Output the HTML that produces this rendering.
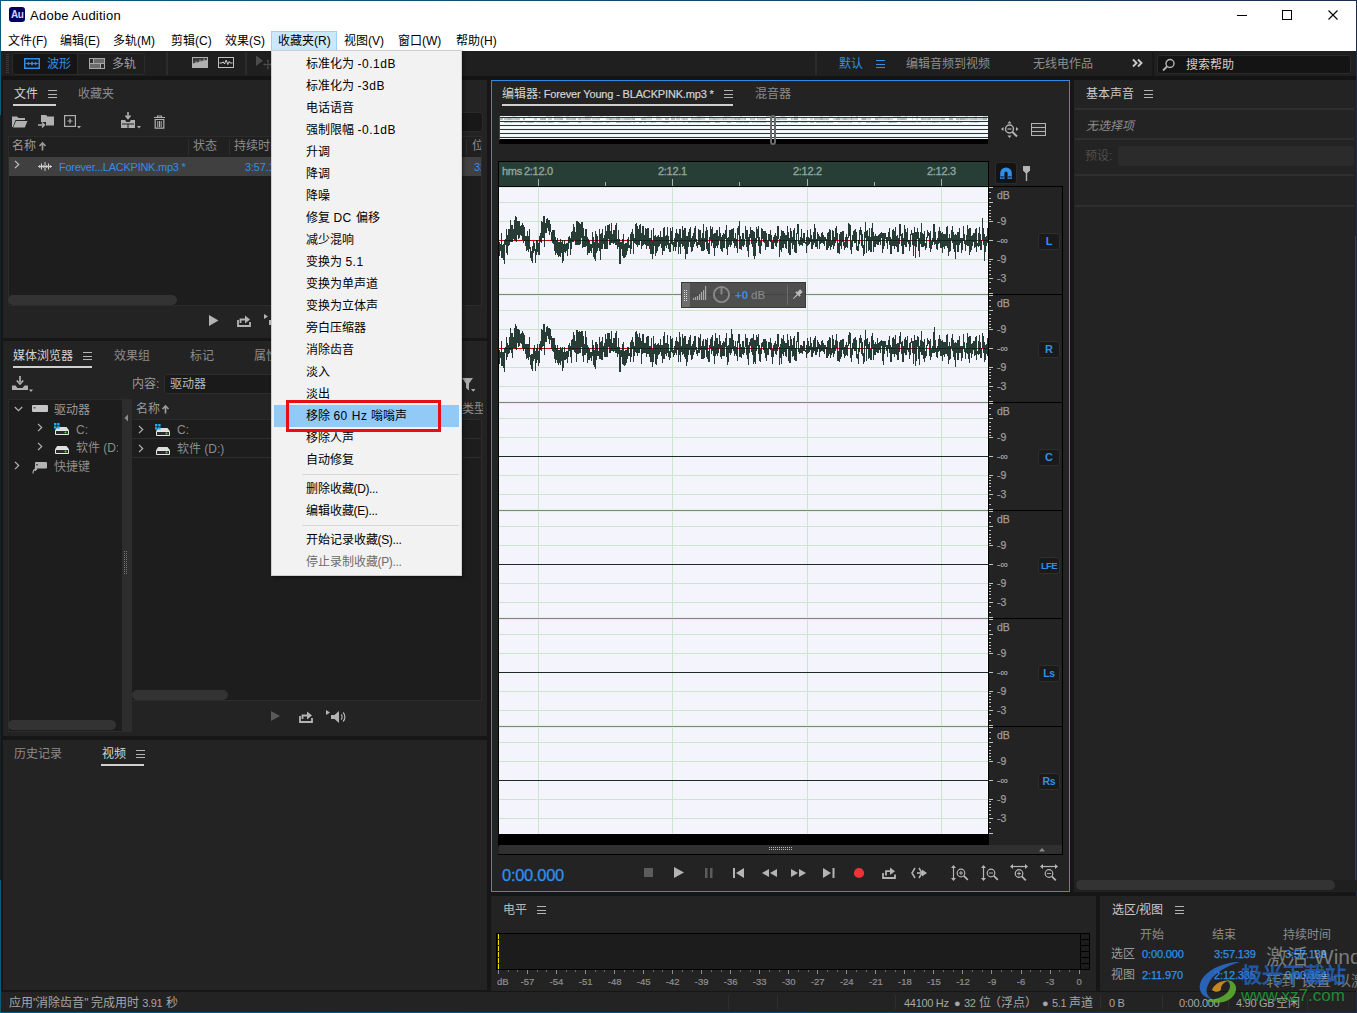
<!DOCTYPE html>
<html lang="zh-CN"><head><meta charset="utf-8"><title>Adobe Audition</title>
<style>
*{box-sizing:border-box;margin:0;padding:0}
html,body{width:1357px;height:1013px;overflow:hidden;background:#161616}
body{font-family:"Liberation Sans",sans-serif;font-size:12px;color:#a9a9a9}
#app{position:relative;width:1357px;height:1013px;overflow:hidden;background:#161616}
.a{position:absolute}
.t{position:absolute;white-space:nowrap;line-height:16px;height:16px}
.pn{position:absolute;background:#232323}
.bl{color:#2f8fe9}
.hi{color:#d4d4d4}
.dim{color:#8c8c8c}
svg{position:absolute;overflow:visible}
/* title + menubar */
#titlebar{left:1px;top:1px;width:1355px;height:29px;background:#fff}
#menubar{left:1px;top:30px;width:1355px;height:21px;background:#fff}
.mi{position:absolute;top:33px;height:16px;line-height:16px;font-size:12px;color:#000;white-space:nowrap}
/* dropdown */
#dd{left:271px;top:50px;width:191px;height:526px;background:#f2f2f2;border:1px solid #cfcfcf;box-shadow:2px 2px 3px rgba(0,0,0,.35)}
.di{position:absolute;left:35px;height:22px;line-height:22px;font-size:12px;color:#000;white-space:nowrap}
.sep{position:absolute;left:34px;width:153px;height:1px;background:#d7d7d7}
.ham{position:absolute;width:9px;height:8px;border-top:1px solid #b4b4b4;border-bottom:1px solid #b4b4b4}
.ham:after{content:"";position:absolute;left:0;top:2.5px;width:9px;height:1px;background:#b4b4b4}
.ul{position:absolute;height:2px;background:#cfcfcf}
.ham.b{border-color:#2f8fe9}.ham.b:after{background:#2f8fe9}
.sb{position:absolute;background:#333;border-radius:5px}
.lst{position:absolute;background:#1d1d1d;border:1px solid #2b2b2b}
.chev{position:absolute}
.di{left:33.500px}
.sep{left:30px;width:157px}
.di .l{letter-spacing:.55px}
.di .p{letter-spacing:-.35px}
.rl{font-size:11px;color:#8fa69d;letter-spacing:-.3px;-webkit-text-stroke:.35px #8fa69d}
.dbl{font-size:10.500px;color:#9c9c9c;-webkit-text-stroke:.25px #9c9c9c}
.sn{font-size:11px;color:#a6a6a6;letter-spacing:-.3px}
.sc{font-size:12px;color:#a6a6a6}
.sd{font-size:11px;color:#a6a6a6}
.sv{font-size:11px;letter-spacing:-.12px;-webkit-text-stroke:.25px #2f8fe9}
.lvl{font-size:9.500px;color:#8f8f8f;-webkit-text-stroke:.2px #8f8f8f}

</style></head>
<body>
<div id="app">
<!-- window frame -->
<div class="a" style="left:0;top:0;width:1357px;height:1013px;background:linear-gradient(90deg,#0d5a7a 0%,#12476a 60%,#1d2c4d 100%)"></div>
<div class="a" style="left:0;top:115px;width:1px;height:765px;background:#14222b"></div>
<div class="a" style="left:1356px;top:0;width:1px;height:1013px;background:#1d2c4d"></div>
<div class="a" style="left:1px;top:51px;width:1355px;height:961px;background:#161616"></div>
<!-- title bar -->
<div class="a" id="titlebar"></div>
<div class="a" style="left:9px;top:7px;width:16px;height:15px;background:#00005b;border-radius:3px"></div>
<div class="t" style="left:11px;top:7px;font-size:10px;font-weight:bold;color:#cfcfff;line-height:15px;height:15px;letter-spacing:-.5px">Au</div>
<div class="t" id="ttl" style="left:30px;top:8px;font-size:13px;color:#000;letter-spacing:.25px">Adobe Audition</div>
<svg style="left:1230px;top:5px" width="120" height="22" viewBox="0 0 120 22"><g stroke="#000" stroke-width="1" fill="none" shape-rendering="crispEdges">
<path d="M7 10.5h10"/><rect x="52.5" y="5.5" width="9" height="9"/></g><path d="M98.500 5.500l9 9M107.500 5.500l-9 9" stroke="#000" stroke-width="1.1" fill="none"/></svg>
<!-- menu bar -->
<div class="a" id="menubar"></div>
<div class="a" style="left:271px;top:31px;width:66px;height:20px;background:#cce8ff;border:1px solid #99d1ff"></div>
<div class="mi" style="left:8px">文件(F)</div>
<div class="mi" style="left:60px">编辑(E)</div>
<div class="mi" style="left:113px">多轨(M)</div>
<div class="mi" style="left:171px">剪辑(C)</div>
<div class="mi" style="left:225px">效果(S)</div>
<div class="mi" style="left:278px">收藏夹(R)</div>
<div class="mi" style="left:344px">视图(V)</div>
<div class="mi" style="left:398px">窗口(W)</div>
<div class="mi" style="left:456px">帮助(H)</div>
<!-- toolbar -->
<div class="a" style="left:1px;top:51px;width:1355px;height:25px;background:#1f1f1f"></div>
<div class="a" style="left:1px;top:76px;width:1355px;height:4px;background:#141414"></div>
<!-- grip -->
<svg style="left:6px;top:54px" width="4" height="20"><g fill="#3a3a3a"><rect x="0" y="0" width="3" height="1"/><rect x="0" y="2" width="3" height="1"/><rect x="0" y="4" width="3" height="1"/><rect x="0" y="6" width="3" height="1"/><rect x="0" y="8" width="3" height="1"/><rect x="0" y="10" width="3" height="1"/><rect x="0" y="12" width="3" height="1"/><rect x="0" y="14" width="3" height="1"/><rect x="0" y="16" width="3" height="1"/><rect x="0" y="18" width="3" height="1"/></g></svg>
<div class="a" style="left:12px;top:53px;width:133px;height:22px;background:#1f1f1f;border:1px solid #2b2b2b;border-radius:3px"></div>
<div class="a" style="left:12px;top:53px;width:66px;height:22px;background:#151515;border:1px solid #2b2b2b;border-radius:3px 0 0 3px"></div>
<svg style="left:24px;top:58px" width="16" height="11" viewBox="0 0 16 11"><rect x=".75" y=".75" width="14.5" height="9.5" fill="none" stroke="#2f8fe9" stroke-width="1.5"/><path d="M1.500 5.500h13" stroke="#2f8fe9" stroke-width="1"/><path d="M3 5.500l1.500-2 1.500 2-1.500 2zM6.500 5.500l1.500-2.500 1.500 2.500-1.500 2.500zM10 5.500l1.500-2 1.500 2-1.500 2z" fill="#2f8fe9"/></svg>
<div class="t bl" style="left:47px;top:56px">波形</div>
<svg style="left:89px;top:58px" width="16" height="11" viewBox="0 0 16 11" shape-rendering="crispEdges"><rect x="0" y="0" width="16" height="11" fill="#a8a8a8"/><rect x="1" y="1" width="3" height="4" fill="#2a2a2a"/><rect x="5" y="1" width="10" height="4" fill="#6a6a6a"/><rect x="1" y="6" width="10" height="4" fill="#6a6a6a"/><rect x="12" y="6" width="3" height="4" fill="#2a2a2a"/></svg>
<div class="t" style="left:112px;top:56px;color:#a0a0a0">多轨</div>
<div class="a" style="left:166px;top:52px;width:2px;height:23px;background:#2b2b2b"></div>
<svg style="left:192px;top:57px" width="16" height="11" viewBox="0 0 16 11"><rect x="0" y="0" width="16" height="11" fill="#b0b0b0"/><rect x="1" y="1" width="14" height="9" fill="#3a3a3a"/><path d="M1 10V7l1-1.500 1 1 1-3 1 2.500 1-1.500 1 1 1-3.500 1 3 1-2 1 1.500 1-3.500 1 3 1-1.500 1 1V10z" fill="#b0b0b0"/></svg>
<svg style="left:218px;top:57px" width="16" height="11" viewBox="0 0 16 11"><rect x=".5" y=".5" width="15" height="10" fill="#1c1c1c" stroke="#c0c0c0"/><path d="M1.500 6h2.500l1.200-1.200 1.300 2.200 1.700-4 1.600 4.500 1.400-3 1 1.500h2.300" stroke="#d0d0d0" stroke-width="1" fill="none"/></svg>
<div class="a" style="left:245px;top:52px;width:2px;height:23px;background:#2b2b2b"></div>
<svg style="left:256px;top:55px" width="16" height="16" viewBox="0 0 16 16"><path d="M0 .5v10.500l7-5.200z" fill="#4c4c4c"/><path d="M12 5.500v8M8 9.500h8" stroke="#4c4c4c" stroke-width="1.100"/><path d="M12 4.500l1.500 2h-3zM12 14.500l1.500-2h-3zM7 9.500l2-1.500v3zM16 9.500l-2-1.500v3z" fill="#4c4c4c"/></svg>
<!-- right of toolbar -->
<div class="a" style="left:815px;top:52px;width:2px;height:23px;background:#2b2b2b"></div>
<div class="t bl" style="left:839px;top:56px">默认</div>
<div class="ham b" style="left:876px;top:60px"></div>
<div class="t" style="left:906px;top:56px;color:#8e8e8e">编辑音频到视频</div>
<div class="t" style="left:1033px;top:56px;color:#8e8e8e">无线电作品</div>
<svg style="left:1132px;top:59px" width="11" height="8" viewBox="0 0 11 8"><path d="M1 .5l3.500 3.500L1 7.500M6 .5l3.500 3.500L6 7.500" stroke="#c8c8c8" stroke-width="1.900" fill="none"/></svg>
<div class="a" style="left:1152px;top:52px;width:2px;height:24px;background:#181818"></div>
<div class="a" style="left:1157px;top:55px;width:194px;height:19px;background:#141414;border:1px solid #2b2b2b;border-radius:3px"></div>
<svg style="left:1162px;top:58px" width="14" height="14" viewBox="0 0 14 14"><circle cx="8" cy="5.500" r="4" fill="none" stroke="#b4b4b4" stroke-width="1.400"/><path d="M5 8.500L1 12.500" stroke="#b4b4b4" stroke-width="1.800"/></svg>
<div class="t" style="left:1186px;top:57px;color:#cfcfcf">搜索帮助</div>
<!-- FILES panel -->
<div class="pn" style="left:3px;top:80px;width:484px;height:258px"></div>
<div class="t hi" style="left:14px;top:86px">文件</div>
<div class="ham" style="left:48px;top:90px"></div>
<div class="ul" style="left:13px;top:104px;width:43px"></div>
<div class="t dim" style="left:78px;top:86px">收藏夹</div>
<!-- file toolbar icons -->
<svg style="left:12px;top:114px" width="16" height="15" viewBox="0 0 16 15"><path d="M0 2.500h5l1.500 1.500H13v2H3.500L.8 13H0z" fill="#b0b0b0"/><path d="M4 7h11.500l-2.700 6.500H1.200z" fill="#b0b0b0"/></svg>
<svg style="left:38px;top:113px" width="17" height="17" viewBox="0 0 17 17"><path d="M3 2h5l1.500 1.500H16v9H8V9H3z" fill="#b0b0b0"/><path d="M0 12h6M4 9.500l2.500 2.500L4 14.500" stroke="#b0b0b0" stroke-width="1.400" fill="none"/></svg>
<svg style="left:64px;top:115px" width="18" height="15" viewBox="0 0 18 15"><rect x=".6" y=".6" width="10.800" height="10.800" fill="none" stroke="#b0b0b0" stroke-width="1.200"/><path d="M6 3.500v5M3.500 6h5" stroke="#b0b0b0" stroke-width="1.200"/><path d="M13 11h4l-2 2.500z" fill="#b0b0b0"/></svg>
<svg style="left:121px;top:112px" width="21" height="18" viewBox="0 0 21 18"><path d="M7 0v5M4.500 3.500L7 6.500l2.500-3" stroke="#b0b0b0" stroke-width="1.600" fill="none"/><path d="M0 8h4l1.500 2h3L10 8h4v8H0z" fill="#b0b0b0"/><path d="M1 12h12M7 12v4" stroke="#232323" stroke-width="1"/><path d="M16 14h4l-2 2.500z" fill="#b0b0b0"/></svg>
<svg style="left:153px;top:115px" width="13" height="14" viewBox="0 0 13 14"><path d="M1 2.500h11M4.500 2.500v-1.500h4v1.500" stroke="#b0b0b0" stroke-width="1.200" fill="none"/><path d="M2.200 4.500h8.600v8.700H2.200z" fill="none" stroke="#b0b0b0" stroke-width="1.200"/><path d="M4.800 6v6M6.500 6v6M8.200 6v6" stroke="#b0b0b0" stroke-width="1"/></svg>
<!-- search box (peeking right of menu) -->
<div class="a" style="left:330px;top:112px;width:153px;height:20px;background:#181818;border:1px solid #2b2b2b;border-radius:3px"></div>
<!-- list -->
<div class="lst" style="left:8px;top:136px;width:474px;height:170px"></div>
<div class="a" style="left:9px;top:137px;width:472px;height:20px;background:#202020"></div>
<div class="t" style="left:12px;top:138px;color:#9a9a9a">名称</div>
<svg style="left:38px;top:142px" width="9" height="9" viewBox="0 0 9 9"><path d="M4.500 1v7.500M1.500 4l3-3 3 3" stroke="#9a9a9a" stroke-width="1.700" fill="none"/></svg>
<div class="a" style="left:188px;top:139px;width:1px;height:16px;background:#2d2d2d"></div>
<div class="t" style="left:193px;top:138px;color:#8c8c8c">状态</div>
<div class="a" style="left:229px;top:139px;width:1px;height:16px;background:#2d2d2d"></div>
<div class="t" style="left:234px;top:138px;color:#8c8c8c">持续时间</div>
<div class="a" style="left:466px;top:139px;width:1px;height:16px;background:#2d2d2d"></div>
<div class="t" style="left:472px;top:138px;color:#8c8c8c;width:9px;overflow:hidden">位</div>
<div class="a" style="left:9px;top:157px;width:472px;height:19px;background:#404040"></div>
<svg class="chev" style="left:14px;top:160px" width="6" height="9" viewBox="0 0 6 9"><path d="M1 .8l3.700 3.700L1 8.200" stroke="#c0c0c0" stroke-width="1.200" fill="none"/></svg>
<svg style="left:38px;top:162px" width="14" height="9" viewBox="0 0 14 9"><path d="M0 4.500h14M3.500 1.500v6M7 0v9M10.500 1.500v6M1.800 3v3M5.200 3v3M8.800 3v3M12.200 3v3" stroke="#d0d0d0" stroke-width="1" fill="none"/></svg>
<div class="t bl" style="left:59px;top:159px;font-size:11px;letter-spacing:-.26px">Forever...LACKPINK.mp3 *</div>
<div class="t bl" style="left:245px;top:159px;font-size:11px;letter-spacing:-.2px">3:57.139</div>
<div class="t bl" style="left:474px;top:159px;font-size:11px;width:7px;overflow:hidden">32</div>
<div class="sb" style="left:8px;top:295px;width:169px;height:10px"></div>
<!-- transport mini -->
<svg style="left:209px;top:315px" width="10" height="11" viewBox="0 0 10 11"><path d="M0 0l9.500 5.500L0 11z" fill="#b4b4b4"/></svg>
<svg style="left:237px;top:314px" width="15" height="13" viewBox="0 0 15 13"><path d="M1 6v6h12V8" stroke="#b4b4b4" stroke-width="1.800" fill="none"/><path d="M3.500 9V5.500h5" stroke="#b4b4b4" stroke-width="1.800" fill="none"/><path d="M8 1.500l5 4-5 4z" fill="#b4b4b4"/></svg>
<svg style="left:263px;top:314px" width="12" height="14" viewBox="0 0 12 14"><path d="M1 0l4 2.500L1 5z" fill="#b4b4b4"/><path d="M6 6h3v5H6z" fill="#b4b4b4"/></svg>
<!-- MEDIA BROWSER panel -->
<div class="pn" style="left:3px;top:341px;width:484px;height:395px"></div>
<div class="t hi" style="left:13px;top:348px">媒体浏览器</div>
<div class="ham" style="left:83px;top:352px"></div>
<div class="ul" style="left:13px;top:366px;width:79px"></div>
<div class="t dim" style="left:114px;top:348px">效果组</div>
<div class="t dim" style="left:190px;top:348px">标记</div>
<div class="t dim" style="left:254px;top:348px">属性</div>
<!-- import icon -->
<svg style="left:12px;top:376px" width="22" height="16" viewBox="0 0 22 16"><path d="M8 0v6M4.800 4.500L8 8l3.200-3.500" stroke="#b0b0b0" stroke-width="1.700" fill="none"/><path d="M0 9.500h3.500l2 2.500h5l2-2.500H16V14H0z" fill="#b0b0b0"/><path d="M17 13.500h4l-2 2.500z" fill="#b0b0b0"/></svg>
<div class="t" style="left:132px;top:376px;color:#9a9a9a">内容:</div>
<div class="a" style="left:164px;top:374px;width:290px;height:20px;background:#1a1a1a;border:1px solid #2d2d2d;border-radius:3px"></div>
<div class="t" style="left:170px;top:376px;color:#b9b9b9">驱动器</div>
<!-- filter icon peeking out right of menu -->
<svg style="left:462px;top:378px" width="14" height="14" viewBox="0 0 14 14"><path d="M0 0h11L7 5.500V12.500L4 10V5.500z" fill="#a8a8a8"/><path d="M9 11h4.500l-2.250 2.700z" fill="#a8a8a8"/></svg>
<!-- tree -->
<div class="lst" style="left:8px;top:399px;width:114px;height:333px;border-right:none"></div>
<div class="a" style="left:122px;top:399px;width:10px;height:333px;background:#2d2d2d"></div>
<svg style="left:124px;top:414px" width="5" height="9" viewBox="0 0 5 9"><path d="M4 .5v7L.5 4z" fill="#8c8c8c"/></svg>
<svg style="left:124px;top:551px" width="5" height="30" viewBox="0 0 5 30"><g fill="#777"><rect x="0" y="0" width="1" height="1"/><rect x="2" y="0" width="1" height="1"/><rect x="0" y="2" width="1" height="1"/><rect x="2" y="2" width="1" height="1"/><rect x="0" y="4" width="1" height="1"/><rect x="2" y="4" width="1" height="1"/><rect x="0" y="6" width="1" height="1"/><rect x="2" y="6" width="1" height="1"/><rect x="0" y="8" width="1" height="1"/><rect x="2" y="8" width="1" height="1"/><rect x="0" y="10" width="1" height="1"/><rect x="2" y="10" width="1" height="1"/><rect x="0" y="12" width="1" height="1"/><rect x="2" y="12" width="1" height="1"/><rect x="0" y="14" width="1" height="1"/><rect x="2" y="14" width="1" height="1"/><rect x="0" y="16" width="1" height="1"/><rect x="2" y="16" width="1" height="1"/><rect x="0" y="18" width="1" height="1"/><rect x="2" y="18" width="1" height="1"/><rect x="0" y="20" width="1" height="1"/><rect x="2" y="20" width="1" height="1"/><rect x="0" y="22" width="1" height="1"/><rect x="2" y="22" width="1" height="1"/></g></svg>
<!-- tree rows -->
<svg class="chev" style="left:14px;top:406px" width="9" height="6" viewBox="0 0 9 6"><path d="M.8 1l3.700 3.700L8.200 1" stroke="#b4b4b4" stroke-width="1.200" fill="none"/></svg>
<svg style="left:32px;top:405px" width="16" height="7" viewBox="0 0 16 7"><rect x="0" y="0" width="16" height="7" rx="1" fill="#c4c4c4"/><rect x="1.500" y="2" width="2" height="1.500" fill="#555"/></svg>
<div class="t" style="left:54px;top:402px;color:#9a9a9a">驱动器</div>
<svg class="chev" style="left:37px;top:423px" width="6" height="9" viewBox="0 0 6 9"><path d="M1 .8l3.700 3.700L1 8.200" stroke="#b4b4b4" stroke-width="1.200" fill="none"/></svg>
<svg style="left:54px;top:422px" width="16" height="14" viewBox="0 0 16 14"><path d="M3.200 5h9.300L15 8.200H1z" fill="#dedede"/><rect x="1" y="8" width="14" height="5" rx=".8" fill="#e6e6e6"/><rect x="2" y="9" width="12" height="3" fill="#2b2b2b"/><circle cx="11.500" cy="10.500" r="1" fill="#3be03b"/><g fill="#12b4f5"><rect x="0" y="1" width="2.400" height="2.400"/><rect x="3.200" y="1" width="2.400" height="2.400"/><rect x="0" y="4.200" width="2.400" height="2.400"/><rect x="3.200" y="4.200" width="2.400" height="2.400"/></g></svg>
<div class="t" style="left:76px;top:422px;color:#8c8c8c">C:</div>
<svg class="chev" style="left:37px;top:442px" width="6" height="9" viewBox="0 0 6 9"><path d="M1 .8l3.700 3.700L1 8.200" stroke="#b4b4b4" stroke-width="1.200" fill="none"/></svg>
<svg style="left:54px;top:441px" width="16" height="14" viewBox="0 0 16 14"><path d="M3.200 5h9.300L15 8.200H1z" fill="#dedede"/><rect x="1" y="8" width="14" height="5" rx=".8" fill="#e6e6e6"/><rect x="2" y="9" width="12" height="3" fill="#2b2b2b"/><circle cx="11.500" cy="10.500" r="1" fill="#3be03b"/></svg>
<div class="t" style="left:76px;top:440px;color:#8c8c8c;width:42px;overflow:hidden">软件 (D:)</div>
<svg class="chev" style="left:14px;top:461px" width="6" height="9" viewBox="0 0 6 9"><path d="M1 .8l3.700 3.700L1 8.200" stroke="#b4b4b4" stroke-width="1.200" fill="none"/></svg>
<svg style="left:32px;top:462px" width="16" height="12" viewBox="0 0 16 12"><rect x="3" y="0" width="12" height="6.500" rx="1" fill="#b4b4b4"/><rect x="4" y="2" width="2" height="1.500" fill="#555"/><path d="M1 11.500c0-3 1-4.500 3.500-4.500M2.800 5.500l2 1.500-2 1.800" stroke="#b4b4b4" stroke-width="1.100" fill="none"/></svg>
<div class="t" style="left:54px;top:459px;color:#8c8c8c">快捷键</div>
<div class="sb" style="left:8px;top:720px;width:108px;height:10px"></div>
<!-- content list -->
<div class="lst" style="left:132px;top:419px;width:350px;height:282px;border-left:none;border-radius:0 3px 0 0"></div>
<div class="a" style="left:132px;top:399px;width:349px;height:20px;background:#232323"></div>
<div class="t" style="left:136px;top:401px;color:#9a9a9a">名称</div>
<svg style="left:161px;top:405px" width="9" height="9" viewBox="0 0 9 9"><path d="M4.500 1v7.500M1.500 4l3-3 3 3" stroke="#9a9a9a" stroke-width="1.700" fill="none"/></svg>
<div class="t" style="left:461.500px;top:401px;color:#8c8c8c;width:21px;overflow:hidden">类型</div>
<div class="a" style="left:132px;top:438px;width:349px;height:1px;background:#2d2d2d"></div>
<div class="a" style="left:132px;top:457px;width:349px;height:1px;background:#2d2d2d"></div>
<svg class="chev" style="left:138px;top:425px" width="6" height="9" viewBox="0 0 6 9"><path d="M1 .8l3.700 3.700L1 8.200" stroke="#b4b4b4" stroke-width="1.200" fill="none"/></svg>
<svg style="left:155px;top:423px" width="16" height="14" viewBox="0 0 16 14"><path d="M3.200 5h9.300L15 8.200H1z" fill="#dedede"/><rect x="1" y="8" width="14" height="5" rx=".8" fill="#e6e6e6"/><rect x="2" y="9" width="12" height="3" fill="#2b2b2b"/><circle cx="11.500" cy="10.500" r="1" fill="#3be03b"/><g fill="#12b4f5"><rect x="0" y="1" width="2.400" height="2.400"/><rect x="3.200" y="1" width="2.400" height="2.400"/><rect x="0" y="4.200" width="2.400" height="2.400"/><rect x="3.200" y="4.200" width="2.400" height="2.400"/></g></svg>
<div class="t" style="left:177px;top:422px;color:#8c8c8c">C:</div>
<svg class="chev" style="left:138px;top:444px" width="6" height="9" viewBox="0 0 6 9"><path d="M1 .8l3.700 3.700L1 8.200" stroke="#b4b4b4" stroke-width="1.200" fill="none"/></svg>
<svg style="left:155px;top:442px" width="16" height="14" viewBox="0 0 16 14"><path d="M3.200 5h9.300L15 8.200H1z" fill="#dedede"/><rect x="1" y="8" width="14" height="5" rx=".8" fill="#e6e6e6"/><rect x="2" y="9" width="12" height="3" fill="#2b2b2b"/><circle cx="11.500" cy="10.500" r="1" fill="#3be03b"/></svg>
<div class="t" style="left:177px;top:441px;color:#8c8c8c">软件 (D:)</div>
<div class="sb" style="left:132px;top:690px;width:96px;height:10px"></div>
<!-- bottom transport -->
<svg style="left:271px;top:711px" width="9" height="10" viewBox="0 0 9 10"><path d="M0 0l9 5L0 10z" fill="#5a5a5a"/></svg>
<svg style="left:299px;top:710px" width="15" height="13" viewBox="0 0 15 13"><path d="M1 6v6h12V8" stroke="#b4b4b4" stroke-width="1.800" fill="none"/><path d="M3.500 9V5.500h5" stroke="#b4b4b4" stroke-width="1.800" fill="none"/><path d="M8 1.500l5 4-5 4z" fill="#b4b4b4"/></svg>
<svg style="left:326px;top:709px" width="22" height="15" viewBox="0 0 22 15"><path d="M0 1l4 2.500L0 6z" fill="#b4b4b4"/><path d="M5 6h3.500L13 2v12L8.500 10H5z" fill="#b4b4b4"/><path d="M15 5.500c1.500 1 1.500 4 0 5M17 3.500c2.500 2 2.500 7 0 9" stroke="#b4b4b4" stroke-width="1.200" fill="none"/></svg>
<!-- HISTORY / VIDEO panel -->
<div class="pn" style="left:3px;top:740px;width:484px;height:250px"></div>
<div class="t dim" style="left:14px;top:746px">历史记录</div>
<div class="t hi" style="left:102px;top:746px">视频</div>
<div class="ham" style="left:136px;top:750px"></div>
<div class="ul" style="left:101px;top:764px;width:43px"></div>
<!-- EDITOR panel -->
<div class="a" style="left:491px;top:80px;width:579px;height:812px;background:#232323;border:1px solid #2d8ceb"></div>
<div class="t hi" style="left:502px;top:86px" id="edtab">编辑器<span style="font-size:11px;letter-spacing:-.16px;-webkit-text-stroke:.2px #d4d4d4">: Forever Young - BLACKPINK.mp3 *</span></div>
<div class="ham" style="left:724px;top:90px"></div>
<div class="ul" style="left:502px;top:104px;width:231px"></div>
<div class="t dim" style="left:755px;top:86px">混音器</div>
<div class="a" style="left:499px;top:116px;width:489px;height:23px;background:#f3f3fc"></div>
<div class="a" style="left:499px;top:139px;width:489px;height:5px;background:#000"></div>
<svg style="left:499px;top:116px" width="489" height="28" viewBox="0 0 489 28" shape-rendering="crispEdges"><rect x="0" y="3" width="489" height="1" fill="#fff"/><rect x="0" y="7" width="489" height="1" fill="#fff"/><rect x="0" y="11" width="489" height="1" fill="#fff"/><rect x="0" y="15" width="489" height="1" fill="#fff"/><rect x="0" y="19" width="489" height="1" fill="#fff"/><rect x="1" y="2" width="3" height="2" fill="#8d9a96" opacity="0.71"/><rect x="4" y="0" width="1" height="1" fill="#8d9a96" opacity="0.22"/><rect x="5" y="2" width="2" height="2" fill="#8d9a96" opacity="0.56"/><rect x="5" y="6" width="2" height="1" fill="#8d9a96" opacity="0.52"/><rect x="7" y="2" width="1" height="2" fill="#8d9a96" opacity="0.53"/><rect x="7" y="6" width="1" height="1" fill="#8d9a96" opacity="0.65"/><rect x="8" y="2" width="1" height="2" fill="#8d9a96" opacity="0.63"/><rect x="8" y="6" width="1" height="1" fill="#8d9a96" opacity="0.30"/><rect x="9" y="2" width="2" height="2" fill="#8d9a96" opacity="0.78"/><rect x="9" y="6" width="2" height="1" fill="#8d9a96" opacity="0.37"/><rect x="11" y="2" width="2" height="2" fill="#8d9a96" opacity="0.66"/><rect x="11" y="6" width="2" height="1" fill="#8d9a96" opacity="0.68"/><rect x="13" y="2" width="4" height="2" fill="#8d9a96" opacity="0.51"/><rect x="13" y="6" width="4" height="1" fill="#8d9a96" opacity="0.36"/><rect x="13" y="0" width="4" height="1" fill="#8d9a96" opacity="0.29"/><rect x="17" y="2" width="1" height="2" fill="#8d9a96" opacity="0.67"/><rect x="17" y="6" width="1" height="1" fill="#8d9a96" opacity="0.44"/><rect x="18" y="2" width="3" height="2" fill="#8d9a96" opacity="0.56"/><rect x="18" y="6" width="3" height="1" fill="#8d9a96" opacity="0.40"/><rect x="21" y="6" width="3" height="1" fill="#8d9a96" opacity="0.62"/><rect x="24" y="2" width="1" height="2" fill="#8d9a96" opacity="0.67"/><rect x="25" y="2" width="1" height="2" fill="#8d9a96" opacity="0.77"/><rect x="26" y="6" width="3" height="1" fill="#8d9a96" opacity="0.49"/><rect x="29" y="6" width="3" height="1" fill="#8d9a96" opacity="0.68"/><rect x="29" y="0" width="3" height="1" fill="#8d9a96" opacity="0.30"/><rect x="32" y="6" width="3" height="1" fill="#8d9a96" opacity="0.67"/><rect x="35" y="2" width="3" height="2" fill="#8d9a96" opacity="0.49"/><rect x="38" y="6" width="3" height="1" fill="#8d9a96" opacity="0.32"/><rect x="41" y="2" width="4" height="2" fill="#8d9a96" opacity="0.68"/><rect x="41" y="6" width="4" height="1" fill="#8d9a96" opacity="0.40"/><rect x="45" y="2" width="2" height="2" fill="#8d9a96" opacity="0.76"/><rect x="45" y="6" width="2" height="1" fill="#8d9a96" opacity="0.50"/><rect x="47" y="0" width="2" height="1" fill="#8d9a96" opacity="0.47"/><rect x="49" y="2" width="4" height="2" fill="#8d9a96" opacity="0.55"/><rect x="49" y="6" width="4" height="1" fill="#8d9a96" opacity="0.64"/><rect x="49" y="0" width="4" height="1" fill="#8d9a96" opacity="0.34"/><rect x="53" y="6" width="2" height="1" fill="#8d9a96" opacity="0.50"/><rect x="55" y="2" width="4" height="2" fill="#8d9a96" opacity="0.56"/><rect x="55" y="0" width="4" height="1" fill="#8d9a96" opacity="0.45"/><rect x="59" y="2" width="2" height="2" fill="#8d9a96" opacity="0.57"/><rect x="59" y="6" width="2" height="1" fill="#8d9a96" opacity="0.34"/><rect x="59" y="0" width="2" height="1" fill="#8d9a96" opacity="0.43"/><rect x="61" y="2" width="3" height="2" fill="#8d9a96" opacity="0.71"/><rect x="61" y="6" width="3" height="1" fill="#8d9a96" opacity="0.53"/><rect x="61" y="0" width="3" height="1" fill="#8d9a96" opacity="0.29"/><rect x="64" y="6" width="3" height="1" fill="#8d9a96" opacity="0.69"/><rect x="67" y="2" width="3" height="2" fill="#8d9a96" opacity="0.61"/><rect x="67" y="6" width="3" height="1" fill="#8d9a96" opacity="0.52"/><rect x="67" y="0" width="3" height="1" fill="#8d9a96" opacity="0.40"/><rect x="70" y="2" width="4" height="2" fill="#8d9a96" opacity="0.58"/><rect x="74" y="2" width="3" height="2" fill="#8d9a96" opacity="0.68"/><rect x="79" y="2" width="3" height="2" fill="#8d9a96" opacity="0.59"/><rect x="79" y="6" width="3" height="1" fill="#8d9a96" opacity="0.63"/><rect x="82" y="2" width="4" height="2" fill="#8d9a96" opacity="0.39"/><rect x="86" y="2" width="4" height="2" fill="#8d9a96" opacity="0.60"/><rect x="86" y="0" width="4" height="1" fill="#8d9a96" opacity="0.50"/><rect x="90" y="2" width="2" height="2" fill="#8d9a96" opacity="0.55"/><rect x="90" y="0" width="2" height="1" fill="#8d9a96" opacity="0.41"/><rect x="92" y="0" width="1" height="1" fill="#8d9a96" opacity="0.47"/><rect x="93" y="2" width="1" height="2" fill="#8d9a96" opacity="0.43"/><rect x="93" y="6" width="1" height="1" fill="#8d9a96" opacity="0.31"/><rect x="94" y="2" width="4" height="2" fill="#8d9a96" opacity="0.38"/><rect x="94" y="6" width="4" height="1" fill="#8d9a96" opacity="0.59"/><rect x="98" y="2" width="3" height="2" fill="#8d9a96" opacity="0.48"/><rect x="98" y="6" width="3" height="1" fill="#8d9a96" opacity="0.35"/><rect x="101" y="6" width="3" height="1" fill="#8d9a96" opacity="0.42"/><rect x="101" y="0" width="3" height="1" fill="#8d9a96" opacity="0.35"/><rect x="107" y="2" width="3" height="2" fill="#8d9a96" opacity="0.42"/><rect x="107" y="6" width="3" height="1" fill="#8d9a96" opacity="0.49"/><rect x="107" y="0" width="3" height="1" fill="#8d9a96" opacity="0.24"/><rect x="110" y="2" width="1" height="2" fill="#8d9a96" opacity="0.75"/><rect x="110" y="6" width="1" height="1" fill="#8d9a96" opacity="0.34"/><rect x="111" y="2" width="2" height="2" fill="#8d9a96" opacity="0.74"/><rect x="113" y="2" width="2" height="2" fill="#8d9a96" opacity="0.57"/><rect x="115" y="2" width="2" height="2" fill="#8d9a96" opacity="0.47"/><rect x="117" y="2" width="4" height="2" fill="#8d9a96" opacity="0.78"/><rect x="117" y="6" width="4" height="1" fill="#8d9a96" opacity="0.67"/><rect x="117" y="0" width="4" height="1" fill="#8d9a96" opacity="0.21"/><rect x="121" y="2" width="4" height="2" fill="#8d9a96" opacity="0.37"/><rect x="121" y="6" width="4" height="1" fill="#8d9a96" opacity="0.46"/><rect x="125" y="2" width="3" height="2" fill="#8d9a96" opacity="0.56"/><rect x="125" y="6" width="3" height="1" fill="#8d9a96" opacity="0.50"/><rect x="128" y="2" width="3" height="2" fill="#8d9a96" opacity="0.62"/><rect x="128" y="6" width="3" height="1" fill="#8d9a96" opacity="0.56"/><rect x="131" y="2" width="1" height="2" fill="#8d9a96" opacity="0.41"/><rect x="131" y="6" width="1" height="1" fill="#8d9a96" opacity="0.58"/><rect x="132" y="2" width="1" height="2" fill="#8d9a96" opacity="0.51"/><rect x="133" y="2" width="1" height="2" fill="#8d9a96" opacity="0.60"/><rect x="133" y="0" width="1" height="1" fill="#8d9a96" opacity="0.41"/><rect x="134" y="2" width="2" height="2" fill="#8d9a96" opacity="0.70"/><rect x="134" y="6" width="2" height="1" fill="#8d9a96" opacity="0.53"/><rect x="140" y="6" width="2" height="1" fill="#8d9a96" opacity="0.60"/><rect x="142" y="2" width="1" height="2" fill="#8d9a96" opacity="0.54"/><rect x="142" y="6" width="1" height="1" fill="#8d9a96" opacity="0.61"/><rect x="143" y="2" width="2" height="2" fill="#8d9a96" opacity="0.66"/><rect x="145" y="2" width="2" height="2" fill="#8d9a96" opacity="0.59"/><rect x="145" y="6" width="2" height="1" fill="#8d9a96" opacity="0.59"/><rect x="145" y="0" width="2" height="1" fill="#8d9a96" opacity="0.23"/><rect x="147" y="2" width="1" height="2" fill="#8d9a96" opacity="0.36"/><rect x="148" y="2" width="4" height="2" fill="#8d9a96" opacity="0.37"/><rect x="148" y="0" width="4" height="1" fill="#8d9a96" opacity="0.39"/><rect x="152" y="2" width="1" height="2" fill="#8d9a96" opacity="0.41"/><rect x="152" y="6" width="1" height="1" fill="#8d9a96" opacity="0.67"/><rect x="152" y="0" width="1" height="1" fill="#8d9a96" opacity="0.38"/><rect x="153" y="6" width="4" height="1" fill="#8d9a96" opacity="0.39"/><rect x="157" y="2" width="4" height="2" fill="#8d9a96" opacity="0.48"/><rect x="157" y="0" width="4" height="1" fill="#8d9a96" opacity="0.32"/><rect x="161" y="2" width="2" height="2" fill="#8d9a96" opacity="0.39"/><rect x="163" y="6" width="3" height="1" fill="#8d9a96" opacity="0.32"/><rect x="166" y="2" width="2" height="2" fill="#8d9a96" opacity="0.66"/><rect x="166" y="6" width="2" height="1" fill="#8d9a96" opacity="0.68"/><rect x="168" y="2" width="2" height="2" fill="#8d9a96" opacity="0.60"/><rect x="168" y="6" width="2" height="1" fill="#8d9a96" opacity="0.60"/><rect x="172" y="2" width="4" height="2" fill="#8d9a96" opacity="0.67"/><rect x="172" y="0" width="4" height="1" fill="#8d9a96" opacity="0.40"/><rect x="176" y="6" width="1" height="1" fill="#8d9a96" opacity="0.48"/><rect x="177" y="2" width="4" height="2" fill="#8d9a96" opacity="0.50"/><rect x="177" y="0" width="4" height="1" fill="#8d9a96" opacity="0.42"/><rect x="182" y="2" width="2" height="2" fill="#8d9a96" opacity="0.39"/><rect x="184" y="2" width="2" height="2" fill="#8d9a96" opacity="0.63"/><rect x="184" y="6" width="2" height="1" fill="#8d9a96" opacity="0.39"/><rect x="186" y="2" width="3" height="2" fill="#8d9a96" opacity="0.52"/><rect x="189" y="6" width="3" height="1" fill="#8d9a96" opacity="0.64"/><rect x="192" y="2" width="2" height="2" fill="#8d9a96" opacity="0.53"/><rect x="192" y="6" width="2" height="1" fill="#8d9a96" opacity="0.31"/><rect x="192" y="0" width="2" height="1" fill="#8d9a96" opacity="0.21"/><rect x="194" y="2" width="4" height="2" fill="#8d9a96" opacity="0.51"/><rect x="194" y="6" width="4" height="1" fill="#8d9a96" opacity="0.42"/><rect x="198" y="2" width="4" height="2" fill="#8d9a96" opacity="0.56"/><rect x="198" y="6" width="4" height="1" fill="#8d9a96" opacity="0.56"/><rect x="198" y="0" width="4" height="1" fill="#8d9a96" opacity="0.46"/><rect x="202" y="2" width="4" height="2" fill="#8d9a96" opacity="0.46"/><rect x="202" y="6" width="4" height="1" fill="#8d9a96" opacity="0.36"/><rect x="202" y="0" width="4" height="1" fill="#8d9a96" opacity="0.27"/><rect x="206" y="6" width="4" height="1" fill="#8d9a96" opacity="0.60"/><rect x="210" y="2" width="1" height="2" fill="#8d9a96" opacity="0.65"/><rect x="210" y="6" width="1" height="1" fill="#8d9a96" opacity="0.68"/><rect x="210" y="0" width="1" height="1" fill="#8d9a96" opacity="0.40"/><rect x="211" y="2" width="3" height="2" fill="#8d9a96" opacity="0.46"/><rect x="211" y="0" width="3" height="1" fill="#8d9a96" opacity="0.41"/><rect x="214" y="2" width="2" height="2" fill="#8d9a96" opacity="0.63"/><rect x="216" y="2" width="3" height="2" fill="#8d9a96" opacity="0.51"/><rect x="216" y="6" width="3" height="1" fill="#8d9a96" opacity="0.70"/><rect x="219" y="2" width="2" height="2" fill="#8d9a96" opacity="0.44"/><rect x="219" y="6" width="2" height="1" fill="#8d9a96" opacity="0.54"/><rect x="221" y="2" width="3" height="2" fill="#8d9a96" opacity="0.38"/><rect x="224" y="2" width="1" height="2" fill="#8d9a96" opacity="0.73"/><rect x="225" y="2" width="1" height="2" fill="#8d9a96" opacity="0.46"/><rect x="225" y="0" width="1" height="1" fill="#8d9a96" opacity="0.34"/><rect x="226" y="2" width="2" height="2" fill="#8d9a96" opacity="0.57"/><rect x="226" y="0" width="2" height="1" fill="#8d9a96" opacity="0.45"/><rect x="228" y="2" width="4" height="2" fill="#8d9a96" opacity="0.37"/><rect x="228" y="6" width="4" height="1" fill="#8d9a96" opacity="0.69"/><rect x="228" y="0" width="4" height="1" fill="#8d9a96" opacity="0.35"/><rect x="232" y="2" width="4" height="2" fill="#8d9a96" opacity="0.46"/><rect x="236" y="2" width="1" height="2" fill="#8d9a96" opacity="0.76"/><rect x="237" y="2" width="2" height="2" fill="#8d9a96" opacity="0.55"/><rect x="237" y="6" width="2" height="1" fill="#8d9a96" opacity="0.47"/><rect x="239" y="2" width="2" height="2" fill="#8d9a96" opacity="0.76"/><rect x="239" y="6" width="2" height="1" fill="#8d9a96" opacity="0.48"/><rect x="241" y="2" width="2" height="2" fill="#8d9a96" opacity="0.41"/><rect x="241" y="6" width="2" height="1" fill="#8d9a96" opacity="0.61"/><rect x="241" y="0" width="2" height="1" fill="#8d9a96" opacity="0.32"/><rect x="243" y="2" width="2" height="2" fill="#8d9a96" opacity="0.39"/><rect x="243" y="6" width="2" height="1" fill="#8d9a96" opacity="0.33"/><rect x="245" y="2" width="2" height="2" fill="#8d9a96" opacity="0.57"/><rect x="245" y="6" width="2" height="1" fill="#8d9a96" opacity="0.58"/><rect x="247" y="6" width="3" height="1" fill="#8d9a96" opacity="0.61"/><rect x="251" y="2" width="1" height="2" fill="#8d9a96" opacity="0.72"/><rect x="252" y="2" width="1" height="2" fill="#8d9a96" opacity="0.47"/><rect x="253" y="2" width="2" height="2" fill="#8d9a96" opacity="0.49"/><rect x="253" y="6" width="2" height="1" fill="#8d9a96" opacity="0.50"/><rect x="255" y="2" width="1" height="2" fill="#8d9a96" opacity="0.69"/><rect x="255" y="0" width="1" height="1" fill="#8d9a96" opacity="0.22"/><rect x="256" y="6" width="2" height="1" fill="#8d9a96" opacity="0.40"/><rect x="258" y="2" width="1" height="2" fill="#8d9a96" opacity="0.54"/><rect x="258" y="6" width="1" height="1" fill="#8d9a96" opacity="0.43"/><rect x="258" y="0" width="1" height="1" fill="#8d9a96" opacity="0.38"/><rect x="259" y="2" width="2" height="2" fill="#8d9a96" opacity="0.39"/><rect x="259" y="6" width="2" height="1" fill="#8d9a96" opacity="0.37"/><rect x="261" y="2" width="4" height="2" fill="#8d9a96" opacity="0.55"/><rect x="261" y="6" width="4" height="1" fill="#8d9a96" opacity="0.43"/><rect x="265" y="2" width="2" height="2" fill="#8d9a96" opacity="0.55"/><rect x="265" y="6" width="2" height="1" fill="#8d9a96" opacity="0.61"/><rect x="267" y="0" width="4" height="1" fill="#8d9a96" opacity="0.44"/><rect x="271" y="2" width="4" height="2" fill="#8d9a96" opacity="0.44"/><rect x="271" y="6" width="4" height="1" fill="#8d9a96" opacity="0.66"/><rect x="271" y="0" width="4" height="1" fill="#8d9a96" opacity="0.41"/><rect x="275" y="2" width="3" height="2" fill="#8d9a96" opacity="0.45"/><rect x="275" y="6" width="3" height="1" fill="#8d9a96" opacity="0.38"/><rect x="278" y="2" width="3" height="2" fill="#8d9a96" opacity="0.70"/><rect x="278" y="6" width="3" height="1" fill="#8d9a96" opacity="0.62"/><rect x="281" y="2" width="1" height="2" fill="#8d9a96" opacity="0.53"/><rect x="281" y="6" width="1" height="1" fill="#8d9a96" opacity="0.63"/><rect x="282" y="2" width="1" height="2" fill="#8d9a96" opacity="0.53"/><rect x="282" y="0" width="1" height="1" fill="#8d9a96" opacity="0.48"/><rect x="283" y="2" width="3" height="2" fill="#8d9a96" opacity="0.56"/><rect x="283" y="6" width="3" height="1" fill="#8d9a96" opacity="0.34"/><rect x="283" y="0" width="3" height="1" fill="#8d9a96" opacity="0.41"/><rect x="286" y="2" width="1" height="2" fill="#8d9a96" opacity="0.61"/><rect x="286" y="6" width="1" height="1" fill="#8d9a96" opacity="0.46"/><rect x="287" y="2" width="1" height="2" fill="#8d9a96" opacity="0.58"/><rect x="287" y="6" width="1" height="1" fill="#8d9a96" opacity="0.52"/><rect x="292" y="2" width="1" height="2" fill="#8d9a96" opacity="0.71"/><rect x="292" y="6" width="1" height="1" fill="#8d9a96" opacity="0.54"/><rect x="293" y="2" width="2" height="2" fill="#8d9a96" opacity="0.38"/><rect x="293" y="6" width="2" height="1" fill="#8d9a96" opacity="0.44"/><rect x="295" y="2" width="4" height="2" fill="#8d9a96" opacity="0.77"/><rect x="295" y="6" width="4" height="1" fill="#8d9a96" opacity="0.59"/><rect x="295" y="0" width="4" height="1" fill="#8d9a96" opacity="0.43"/><rect x="302" y="2" width="2" height="2" fill="#8d9a96" opacity="0.39"/><rect x="302" y="6" width="2" height="1" fill="#8d9a96" opacity="0.44"/><rect x="304" y="2" width="4" height="2" fill="#8d9a96" opacity="0.35"/><rect x="304" y="6" width="4" height="1" fill="#8d9a96" opacity="0.37"/><rect x="311" y="2" width="3" height="2" fill="#8d9a96" opacity="0.40"/><rect x="311" y="6" width="3" height="1" fill="#8d9a96" opacity="0.62"/><rect x="314" y="6" width="1" height="1" fill="#8d9a96" opacity="0.55"/><rect x="315" y="2" width="2" height="2" fill="#8d9a96" opacity="0.61"/><rect x="317" y="2" width="4" height="2" fill="#8d9a96" opacity="0.54"/><rect x="317" y="6" width="4" height="1" fill="#8d9a96" opacity="0.66"/><rect x="321" y="2" width="3" height="2" fill="#8d9a96" opacity="0.75"/><rect x="321" y="6" width="3" height="1" fill="#8d9a96" opacity="0.47"/><rect x="321" y="0" width="3" height="1" fill="#8d9a96" opacity="0.29"/><rect x="324" y="2" width="2" height="2" fill="#8d9a96" opacity="0.50"/><rect x="324" y="6" width="2" height="1" fill="#8d9a96" opacity="0.61"/><rect x="326" y="2" width="1" height="2" fill="#8d9a96" opacity="0.57"/><rect x="327" y="2" width="3" height="2" fill="#8d9a96" opacity="0.56"/><rect x="327" y="6" width="3" height="1" fill="#8d9a96" opacity="0.66"/><rect x="330" y="6" width="4" height="1" fill="#8d9a96" opacity="0.57"/><rect x="330" y="0" width="4" height="1" fill="#8d9a96" opacity="0.30"/><rect x="334" y="2" width="3" height="2" fill="#8d9a96" opacity="0.40"/><rect x="337" y="2" width="2" height="2" fill="#8d9a96" opacity="0.77"/><rect x="339" y="2" width="1" height="2" fill="#8d9a96" opacity="0.72"/><rect x="339" y="6" width="1" height="1" fill="#8d9a96" opacity="0.43"/><rect x="339" y="0" width="1" height="1" fill="#8d9a96" opacity="0.47"/><rect x="340" y="2" width="1" height="2" fill="#8d9a96" opacity="0.77"/><rect x="340" y="6" width="1" height="1" fill="#8d9a96" opacity="0.30"/><rect x="341" y="2" width="3" height="2" fill="#8d9a96" opacity="0.35"/><rect x="341" y="6" width="3" height="1" fill="#8d9a96" opacity="0.44"/><rect x="344" y="2" width="4" height="2" fill="#8d9a96" opacity="0.67"/><rect x="344" y="6" width="4" height="1" fill="#8d9a96" opacity="0.35"/><rect x="348" y="2" width="3" height="2" fill="#8d9a96" opacity="0.44"/><rect x="348" y="6" width="3" height="1" fill="#8d9a96" opacity="0.36"/><rect x="351" y="2" width="1" height="2" fill="#8d9a96" opacity="0.48"/><rect x="351" y="6" width="1" height="1" fill="#8d9a96" opacity="0.64"/><rect x="352" y="2" width="1" height="2" fill="#8d9a96" opacity="0.79"/><rect x="352" y="6" width="1" height="1" fill="#8d9a96" opacity="0.59"/><rect x="352" y="0" width="1" height="1" fill="#8d9a96" opacity="0.49"/><rect x="353" y="2" width="4" height="2" fill="#8d9a96" opacity="0.43"/><rect x="357" y="2" width="2" height="2" fill="#8d9a96" opacity="0.51"/><rect x="357" y="0" width="2" height="1" fill="#8d9a96" opacity="0.43"/><rect x="359" y="6" width="3" height="1" fill="#8d9a96" opacity="0.52"/><rect x="362" y="2" width="1" height="2" fill="#8d9a96" opacity="0.45"/><rect x="363" y="2" width="4" height="2" fill="#8d9a96" opacity="0.78"/><rect x="367" y="2" width="4" height="2" fill="#8d9a96" opacity="0.37"/><rect x="367" y="6" width="4" height="1" fill="#8d9a96" opacity="0.61"/><rect x="371" y="2" width="1" height="2" fill="#8d9a96" opacity="0.54"/><rect x="372" y="6" width="4" height="1" fill="#8d9a96" opacity="0.70"/><rect x="376" y="2" width="3" height="2" fill="#8d9a96" opacity="0.70"/><rect x="376" y="6" width="3" height="1" fill="#8d9a96" opacity="0.69"/><rect x="379" y="2" width="2" height="2" fill="#8d9a96" opacity="0.44"/><rect x="379" y="6" width="2" height="1" fill="#8d9a96" opacity="0.45"/><rect x="379" y="0" width="2" height="1" fill="#8d9a96" opacity="0.39"/><rect x="381" y="2" width="2" height="2" fill="#8d9a96" opacity="0.38"/><rect x="381" y="0" width="2" height="1" fill="#8d9a96" opacity="0.32"/><rect x="383" y="2" width="2" height="2" fill="#8d9a96" opacity="0.36"/><rect x="385" y="2" width="4" height="2" fill="#8d9a96" opacity="0.46"/><rect x="389" y="2" width="1" height="2" fill="#8d9a96" opacity="0.72"/><rect x="389" y="6" width="1" height="1" fill="#8d9a96" opacity="0.35"/><rect x="390" y="2" width="3" height="2" fill="#8d9a96" opacity="0.42"/><rect x="390" y="6" width="3" height="1" fill="#8d9a96" opacity="0.69"/><rect x="393" y="2" width="1" height="2" fill="#8d9a96" opacity="0.40"/><rect x="393" y="6" width="1" height="1" fill="#8d9a96" opacity="0.42"/><rect x="394" y="6" width="4" height="1" fill="#8d9a96" opacity="0.53"/><rect x="394" y="0" width="4" height="1" fill="#8d9a96" opacity="0.36"/><rect x="398" y="2" width="4" height="2" fill="#8d9a96" opacity="0.57"/><rect x="398" y="0" width="4" height="1" fill="#8d9a96" opacity="0.43"/><rect x="402" y="2" width="4" height="2" fill="#8d9a96" opacity="0.67"/><rect x="402" y="6" width="4" height="1" fill="#8d9a96" opacity="0.42"/><rect x="406" y="2" width="2" height="2" fill="#8d9a96" opacity="0.52"/><rect x="406" y="6" width="2" height="1" fill="#8d9a96" opacity="0.31"/><rect x="406" y="0" width="2" height="1" fill="#8d9a96" opacity="0.34"/><rect x="408" y="6" width="1" height="1" fill="#8d9a96" opacity="0.51"/><rect x="409" y="6" width="4" height="1" fill="#8d9a96" opacity="0.37"/><rect x="413" y="2" width="1" height="2" fill="#8d9a96" opacity="0.37"/><rect x="413" y="6" width="1" height="1" fill="#8d9a96" opacity="0.55"/><rect x="413" y="0" width="1" height="1" fill="#8d9a96" opacity="0.35"/><rect x="414" y="6" width="3" height="1" fill="#8d9a96" opacity="0.44"/><rect x="417" y="2" width="2" height="2" fill="#8d9a96" opacity="0.37"/><rect x="417" y="0" width="2" height="1" fill="#8d9a96" opacity="0.47"/><rect x="419" y="6" width="3" height="1" fill="#8d9a96" opacity="0.41"/><rect x="422" y="2" width="1" height="2" fill="#8d9a96" opacity="0.72"/><rect x="423" y="2" width="2" height="2" fill="#8d9a96" opacity="0.62"/><rect x="425" y="2" width="2" height="2" fill="#8d9a96" opacity="0.60"/><rect x="427" y="2" width="1" height="2" fill="#8d9a96" opacity="0.37"/><rect x="428" y="2" width="1" height="2" fill="#8d9a96" opacity="0.54"/><rect x="428" y="6" width="1" height="1" fill="#8d9a96" opacity="0.51"/><rect x="429" y="2" width="2" height="2" fill="#8d9a96" opacity="0.66"/><rect x="431" y="2" width="1" height="2" fill="#8d9a96" opacity="0.67"/><rect x="431" y="6" width="1" height="1" fill="#8d9a96" opacity="0.51"/><rect x="432" y="0" width="1" height="1" fill="#8d9a96" opacity="0.32"/><rect x="433" y="2" width="3" height="2" fill="#8d9a96" opacity="0.48"/><rect x="433" y="6" width="3" height="1" fill="#8d9a96" opacity="0.60"/><rect x="436" y="2" width="4" height="2" fill="#8d9a96" opacity="0.42"/><rect x="436" y="6" width="4" height="1" fill="#8d9a96" opacity="0.41"/><rect x="440" y="2" width="2" height="2" fill="#8d9a96" opacity="0.42"/><rect x="442" y="2" width="4" height="2" fill="#8d9a96" opacity="0.64"/><rect x="442" y="6" width="4" height="1" fill="#8d9a96" opacity="0.36"/><rect x="446" y="6" width="4" height="1" fill="#8d9a96" opacity="0.31"/><rect x="450" y="2" width="4" height="2" fill="#8d9a96" opacity="0.78"/><rect x="450" y="6" width="4" height="1" fill="#8d9a96" opacity="0.40"/><rect x="450" y="0" width="4" height="1" fill="#8d9a96" opacity="0.37"/><rect x="454" y="6" width="3" height="1" fill="#8d9a96" opacity="0.34"/><rect x="454" y="0" width="3" height="1" fill="#8d9a96" opacity="0.31"/><rect x="457" y="2" width="3" height="2" fill="#8d9a96" opacity="0.67"/><rect x="457" y="6" width="3" height="1" fill="#8d9a96" opacity="0.63"/><rect x="460" y="2" width="1" height="2" fill="#8d9a96" opacity="0.40"/><rect x="461" y="2" width="2" height="2" fill="#8d9a96" opacity="0.79"/><rect x="461" y="6" width="2" height="1" fill="#8d9a96" opacity="0.55"/><rect x="463" y="2" width="3" height="2" fill="#8d9a96" opacity="0.74"/><rect x="466" y="2" width="3" height="2" fill="#8d9a96" opacity="0.53"/><rect x="466" y="0" width="3" height="1" fill="#8d9a96" opacity="0.29"/><rect x="469" y="2" width="2" height="2" fill="#8d9a96" opacity="0.39"/><rect x="471" y="2" width="4" height="2" fill="#8d9a96" opacity="0.54"/><rect x="471" y="6" width="4" height="1" fill="#8d9a96" opacity="0.31"/><rect x="475" y="2" width="3" height="2" fill="#8d9a96" opacity="0.66"/><rect x="475" y="6" width="3" height="1" fill="#8d9a96" opacity="0.44"/><rect x="475" y="0" width="3" height="1" fill="#8d9a96" opacity="0.31"/><rect x="478" y="2" width="2" height="2" fill="#8d9a96" opacity="0.40"/><rect x="478" y="6" width="2" height="1" fill="#8d9a96" opacity="0.33"/><rect x="480" y="2" width="4" height="2" fill="#8d9a96" opacity="0.47"/><rect x="484" y="2" width="4" height="2" fill="#8d9a96" opacity="0.75"/><rect x="484" y="0" width="4" height="1" fill="#8d9a96" opacity="0.40"/><rect x="0" y="1" width="489" height="1" fill="#233a33"/><rect x="0" y="5" width="489" height="1" fill="#233a33"/><rect x="0" y="9" width="489" height="1" fill="#233a33"/><rect x="0" y="13" width="489" height="1" fill="#233a33"/><rect x="0" y="17" width="489" height="1" fill="#233a33"/><rect x="0" y="21" width="489" height="1" fill="#233a33"/><rect x="0" y="0" width="1" height="24" fill="#d80000"/></svg>
<div class="a" style="left:770px;top:115px;width:6px;height:30px;border:2px solid #6a6a6a;border-radius:3px"></div>
<svg style="left:1000px;top:120px" width="20" height="20" viewBox="0 0 20 20"><circle cx="9.500" cy="9" r="4" fill="none" stroke="#b4b4b4" stroke-width="1.400"/><path d="M7.500 9h4" stroke="#b4b4b4" stroke-width="1.200"/><path d="M12.500 12l4.500 4.500" stroke="#b4b4b4" stroke-width="2"/><path d="M9.500 1l2 2.500h-4zM9.500 18l2-2.500h-4zM1 9l2.500-2v4zM18.500 9l-2.500-2v4z" fill="#b4b4b4"/></svg>
<svg style="left:1031px;top:123px" width="15" height="13" viewBox="0 0 15 13" shape-rendering="crispEdges"><rect x=".5" y=".5" width="14" height="12" fill="#2c2c2c" stroke="#b4b4b4"/><path d="M1 4.500h13M1 8.500h13" stroke="#b4b4b4"/></svg>
<div class="a" style="left:498px;top:161px;width:491px;height:26px;background:#273e37;border:1px solid #000"></div>
<svg style="left:499px;top:162px" width="489" height="24" viewBox="0 0 489 24" shape-rendering="crispEdges"><rect x="39" y="17" width="1" height="7" fill="#a3b5ad"/><rect x="106" y="20" width="1" height="4" fill="#a3b5ad"/><rect x="173" y="17" width="1" height="7" fill="#a3b5ad"/><rect x="240" y="20" width="1" height="4" fill="#a3b5ad"/><rect x="308" y="17" width="1" height="7" fill="#a3b5ad"/><rect x="375" y="20" width="1" height="4" fill="#a3b5ad"/><rect x="442" y="17" width="1" height="7" fill="#a3b5ad"/></svg>
<div class="t rl" style="left:502px;top:163px">hms</div>
<div class="t rl" style="left:524px;top:163px">2:12.0</div>
<div class="t rl" style="left:658px;top:163px">2:12.1</div>
<div class="t rl" style="left:793px;top:163px">2:12.2</div>
<div class="t rl" style="left:927px;top:163px">2:12.3</div>
<div class="a" style="left:995px;top:162px;width:22px;height:22px;background:#141414;border:1px solid #2c2c2c;border-radius:3px"></div>
<svg style="left:1000px;top:167px" width="12" height="12" viewBox="0 0 12 12"><path d="M2.300 12V6.200a3.700 3.700 0 0 1 7.400 0V12" stroke="#2f8fe9" stroke-width="4.200" fill="none"/><path d="M.2 9.500h4.200M7.600 9.500h4.200" stroke="#15406b" stroke-width=".9"/><rect x="1.300" y="10" width="2" height="1.400" fill="#15406b"/><rect x="8.700" y="10" width="2" height="1.400" fill="#15406b"/></svg>
<svg style="left:1022px;top:166px" width="9" height="15" viewBox="0 0 9 15"><path d="M1 0h7v4.500L5.500 7h-2L1 4.500z" fill="#b4b4b4"/><rect x="3.800" y="7" width="1.400" height="8" fill="#b4b4b4"/></svg>
<div class="a" style="left:498px;top:186px;width:491px;height:660px;background:#000"></div>
<div class="a" style="left:499px;top:187px;width:489px;height:647px;background:#f4f4fd"></div>
<svg style="left:499px;top:187px" width="489" height="647" viewBox="0 0 489 647" shape-rendering="crispEdges"><rect x="488" y="0" width="1" height="647" fill="#fdfdff"/><rect x="39" y="0" width="1" height="647" fill="#cde4cd"/><rect x="173" y="0" width="1" height="647" fill="#cde4cd"/><rect x="308" y="0" width="1" height="647" fill="#cde4cd"/><rect x="442" y="0" width="1" height="647" fill="#cde4cd"/><rect x="0" y="15" width="489" height="1" fill="#cde4cd"/><rect x="0" y="34" width="489" height="1" fill="#cde4cd"/><rect x="0" y="72" width="489" height="1" fill="#cde4cd"/><rect x="0" y="91" width="489" height="1" fill="#cde4cd"/><rect x="0" y="123" width="489" height="1" fill="#cde4cd"/><rect x="0" y="142" width="489" height="1" fill="#cde4cd"/><rect x="0" y="180" width="489" height="1" fill="#cde4cd"/><rect x="0" y="199" width="489" height="1" fill="#cde4cd"/><rect x="0" y="231" width="489" height="1" fill="#cde4cd"/><rect x="0" y="250" width="489" height="1" fill="#cde4cd"/><rect x="0" y="288" width="489" height="1" fill="#cde4cd"/><rect x="0" y="307" width="489" height="1" fill="#cde4cd"/><rect x="0" y="339" width="489" height="1" fill="#cde4cd"/><rect x="0" y="358" width="489" height="1" fill="#cde4cd"/><rect x="0" y="396" width="489" height="1" fill="#cde4cd"/><rect x="0" y="415" width="489" height="1" fill="#cde4cd"/><rect x="0" y="447" width="489" height="1" fill="#cde4cd"/><rect x="0" y="466" width="489" height="1" fill="#cde4cd"/><rect x="0" y="504" width="489" height="1" fill="#cde4cd"/><rect x="0" y="523" width="489" height="1" fill="#cde4cd"/><rect x="0" y="555" width="489" height="1" fill="#cde4cd"/><rect x="0" y="574" width="489" height="1" fill="#cde4cd"/><rect x="0" y="612" width="489" height="1" fill="#cde4cd"/><rect x="0" y="631" width="489" height="1" fill="#cde4cd"/><rect x="0" y="0" width="489" height="1" fill="#d9f0d9"/><rect x="0" y="106" width="489" height="1" fill="#dcf3dc"/><rect x="0" y="107" width="489" height="1" fill="#858585"/><rect x="0" y="108" width="489" height="1" fill="#dcf3dc"/><rect x="0" y="214" width="489" height="1" fill="#dcf3dc"/><rect x="0" y="215" width="489" height="1" fill="#858585"/><rect x="0" y="216" width="489" height="1" fill="#dcf3dc"/><rect x="0" y="322" width="489" height="1" fill="#dcf3dc"/><rect x="0" y="323" width="489" height="1" fill="#858585"/><rect x="0" y="324" width="489" height="1" fill="#dcf3dc"/><rect x="0" y="430" width="489" height="1" fill="#dcf3dc"/><rect x="0" y="431" width="489" height="1" fill="#858585"/><rect x="0" y="432" width="489" height="1" fill="#dcf3dc"/><rect x="0" y="538" width="489" height="1" fill="#dcf3dc"/><rect x="0" y="539" width="489" height="1" fill="#858585"/><rect x="0" y="540" width="489" height="1" fill="#dcf3dc"/><rect x="0" y="269" width="489" height="1" fill="#1d2b27"/><rect x="0" y="377" width="489" height="1" fill="#1d2b27"/><rect x="0" y="485" width="489" height="1" fill="#1d2b27"/><rect x="0" y="593" width="489" height="1" fill="#1d2b27"/><rect x="0" y="53" width="489" height="1" fill="#c80a0a"/><path d="M0 55h1v14h-1zM1 57h1v7h-1zM2 46h1v25h-1zM3 58h1v13h-1zM4 57h1v16h-1zM5 53h1v24h-1zM6 52h1v6h-1zM7 42h1v24h-1zM8 48h1v20h-1zM9 42h1v17h-1zM10 42h1v16h-1zM11 33h1v22h-1zM12 38h1v17h-1zM13 38h1v17h-1zM14 42h1v10h-1zM15 33h1v20h-1zM16 29h1v25h-1zM17 30h1v25h-1zM18 34h1v14h-1zM19 34h1v18h-1zM20 34h1v17h-1zM21 39h1v9h-1zM22 38h1v11h-1zM23 36h1v17h-1zM24 38h1v18h-1zM25 40h1v14h-1zM26 49h1v10h-1zM27 49h1v15h-1zM28 44h1v19h-1zM29 49h1v16h-1zM30 42h1v20h-1zM31 60h1v11h-1zM32 64h1v10h-1zM33 59h1v17h-1zM34 54h1v12h-1zM35 56h1v8h-1zM36 62h1v14h-1zM37 53h1v15h-1zM38 53h1v12h-1zM39 56h1v12h-1zM40 49h1v19h-1zM41 46h1v9h-1zM42 34h1v22h-1zM43 35h1v16h-1zM44 29h1v22h-1zM45 29h1v31h-1zM46 36h1v10h-1zM47 32h1v14h-1zM48 31h1v10h-1zM49 33h1v11h-1zM50 33h1v15h-1zM51 37h1v8h-1zM52 45h1v9h-1zM53 43h1v13h-1zM54 43h1v14h-1zM55 43h1v21h-1zM56 50h1v18h-1zM57 53h1v13h-1zM58 51h1v17h-1zM59 55h1v15h-1zM60 55h1v14h-1zM61 52h1v18h-1zM62 55h1v11h-1zM63 53h1v23h-1zM64 57h1v17h-1zM65 53h1v12h-1zM66 57h1v9h-1zM67 56h1v8h-1zM68 56h1v13h-1zM69 50h1v12h-1zM70 49h1v7h-1zM71 51h1v17h-1zM72 45h1v17h-1zM73 44h1v11h-1zM74 37h1v18h-1zM75 40h1v13h-1zM76 45h1v13h-1zM77 34h1v24h-1zM78 34h1v24h-1zM79 35h1v23h-1zM80 36h1v22h-1zM81 37h1v20h-1zM82 35h1v16h-1zM83 35h1v26h-1zM84 41h1v19h-1zM85 49h1v11h-1zM86 42h1v18h-1zM87 42h1v17h-1zM88 50h1v18h-1zM89 52h1v14h-1zM90 54h1v12h-1zM91 57h1v7h-1zM92 57h1v9h-1zM93 45h1v16h-1zM94 50h1v20h-1zM95 55h1v17h-1zM96 44h1v30h-1zM97 47h1v19h-1zM98 49h1v15h-1zM99 56h1v5h-1zM100 42h1v22h-1zM101 47h1v26h-1zM102 46h1v16h-1zM103 42h1v20h-1zM104 51h1v6h-1zM105 48h1v14h-1zM106 39h1v23h-1zM107 44h1v18h-1zM108 38h1v24h-1zM109 38h1v14h-1zM110 37h1v21h-1zM111 44h1v14h-1zM112 36h1v20h-1zM113 47h1v9h-1zM114 43h1v14h-1zM115 43h1v13h-1zM116 38h1v20h-1zM117 36h1v22h-1zM118 52h1v10h-1zM119 43h1v17h-1zM120 52h1v25h-1zM121 55h1v22h-1zM122 55h1v7h-1zM123 52h1v17h-1zM124 47h1v24h-1zM125 57h1v14h-1zM126 56h1v14h-1zM127 56h1v12h-1zM128 52h1v12h-1zM129 50h1v11h-1zM130 58h1v3h-1zM131 47h1v20h-1zM132 45h1v17h-1zM133 42h1v12h-1zM134 47h1v20h-1zM135 51h1v5h-1zM136 37h1v20h-1zM137 36h1v22h-1zM138 39h1v21h-1zM139 42h1v16h-1zM140 38h1v20h-1zM141 37h1v17h-1zM142 46h1v16h-1zM143 39h1v20h-1zM144 39h1v19h-1zM145 48h1v9h-1zM146 41h1v17h-1zM147 42h1v20h-1zM148 41h1v18h-1zM149 41h1v18h-1zM150 51h1v11h-1zM151 51h1v16h-1zM152 43h1v24h-1zM153 54h1v18h-1zM154 41h1v26h-1zM155 49h1v10h-1zM156 48h1v21h-1zM157 50h1v16h-1zM158 49h1v15h-1zM159 48h1v12h-1zM160 50h1v9h-1zM161 44h1v13h-1zM162 50h1v11h-1zM163 50h1v18h-1zM164 41h1v23h-1zM165 40h1v24h-1zM166 49h1v10h-1zM167 48h1v13h-1zM168 40h1v18h-1zM169 49h1v13h-1zM170 56h1v9h-1zM171 41h1v24h-1zM172 44h1v13h-1zM173 40h1v18h-1zM174 55h1v9h-1zM175 51h1v9h-1zM176 46h1v18h-1zM177 42h1v18h-1zM178 46h1v9h-1zM179 47h1v20h-1zM180 42h1v18h-1zM181 42h1v25h-1zM182 51h1v6h-1zM183 39h1v21h-1zM184 43h1v16h-1zM185 41h1v21h-1zM186 41h1v31h-1zM187 49h1v18h-1zM188 49h1v18h-1zM189 45h1v15h-1zM190 42h1v13h-1zM191 40h1v20h-1zM192 51h1v14h-1zM193 49h1v15h-1zM194 46h1v14h-1zM195 41h1v16h-1zM196 39h1v16h-1zM197 52h1v7h-1zM198 55h1v6h-1zM199 42h1v16h-1zM200 43h1v15h-1zM201 43h1v17h-1zM202 51h1v13h-1zM203 46h1v18h-1zM204 37h1v27h-1zM205 51h1v12h-1zM206 44h1v11h-1zM207 40h1v22h-1zM208 43h1v21h-1zM209 56h1v11h-1zM210 50h1v17h-1zM211 39h1v14h-1zM212 42h1v17h-1zM213 40h1v16h-1zM214 47h1v14h-1zM215 46h1v23h-1zM216 46h1v15h-1zM217 43h1v16h-1zM218 43h1v18h-1zM219 49h1v9h-1zM220 40h1v13h-1zM221 46h1v16h-1zM222 50h1v14h-1zM223 48h1v17h-1zM224 46h1v15h-1zM225 47h1v14h-1zM226 43h1v9h-1zM227 38h1v24h-1zM228 51h1v17h-1zM229 50h1v10h-1zM230 43h1v15h-1zM231 43h1v17h-1zM232 42h1v16h-1zM233 42h1v12h-1zM234 41h1v15h-1zM235 51h1v10h-1zM236 46h1v13h-1zM237 52h1v9h-1zM238 41h1v25h-1zM239 39h1v9h-1zM240 34h1v28h-1zM241 49h1v13h-1zM242 52h1v11h-1zM243 46h1v13h-1zM244 46h1v14h-1zM245 52h1v6h-1zM246 39h1v13h-1zM247 43h1v17h-1zM248 43h1v21h-1zM249 50h1v20h-1zM250 47h1v11h-1zM251 40h1v11h-1zM252 43h1v14h-1zM253 43h1v17h-1zM254 44h1v25h-1zM255 45h1v27h-1zM256 51h1v18h-1zM257 40h1v16h-1zM258 42h1v9h-1zM259 39h1v20h-1zM260 50h1v16h-1zM261 54h1v13h-1zM262 41h1v18h-1zM263 42h1v10h-1zM264 44h1v11h-1zM265 44h1v12h-1zM266 44h1v19h-1zM267 46h1v14h-1zM268 54h1v6h-1zM269 47h1v13h-1zM270 47h1v7h-1zM271 43h1v12h-1zM272 48h1v14h-1zM273 54h1v8h-1zM274 50h1v12h-1zM275 48h1v8h-1zM276 46h1v13h-1zM277 49h1v11h-1zM278 39h1v17h-1zM279 39h1v13h-1zM280 52h1v18h-1zM281 49h1v14h-1zM282 43h1v22h-1zM283 44h1v17h-1zM284 44h1v17h-1zM285 46h1v11h-1zM286 48h1v13h-1zM287 48h1v14h-1zM288 39h1v15h-1zM289 45h1v21h-1zM290 51h1v17h-1zM291 41h1v27h-1zM292 44h1v12h-1zM293 50h1v12h-1zM294 43h1v15h-1zM295 41h1v24h-1zM296 53h1v13h-1zM297 46h1v20h-1zM298 37h1v10h-1zM299 37h1v20h-1zM300 54h1v5h-1zM301 50h1v8h-1zM302 42h1v16h-1zM303 51h1v8h-1zM304 46h1v10h-1zM305 46h1v10h-1zM306 55h1v2h-1zM307 50h1v16h-1zM308 43h1v16h-1zM309 50h1v8h-1zM310 51h1v6h-1zM311 42h1v13h-1zM312 48h1v14h-1zM313 52h1v10h-1zM314 45h1v13h-1zM315 37h1v19h-1zM316 41h1v19h-1zM317 52h1v8h-1zM318 45h1v17h-1zM319 47h1v7h-1zM320 49h1v13h-1zM321 50h1v7h-1zM322 46h1v10h-1zM323 45h1v11h-1zM324 48h1v9h-1zM325 50h1v9h-1zM326 50h1v4h-1zM327 52h1v11h-1zM328 46h1v17h-1zM329 45h1v16h-1zM330 42h1v17h-1zM331 43h1v20h-1zM332 54h1v6h-1zM333 43h1v15h-1zM334 44h1v18h-1zM335 50h1v9h-1zM336 41h1v15h-1zM337 39h1v14h-1zM338 46h1v20h-1zM339 56h1v10h-1zM340 47h1v20h-1zM341 45h1v14h-1zM342 45h1v17h-1zM343 44h1v11h-1zM344 44h1v15h-1zM345 55h1v8h-1zM346 50h1v11h-1zM347 47h1v13h-1zM348 50h1v11h-1zM349 36h1v15h-1zM350 37h1v12h-1zM351 38h1v25h-1zM352 54h1v13h-1zM353 48h1v12h-1zM354 44h1v10h-1zM355 43h1v13h-1zM356 42h1v14h-1zM357 45h1v18h-1zM358 59h1v5h-1zM359 53h1v11h-1zM360 43h1v14h-1zM361 40h1v8h-1zM362 43h1v16h-1zM363 47h1v14h-1zM364 58h1v11h-1zM365 45h1v22h-1zM366 35h1v16h-1zM367 44h1v22h-1zM368 43h1v11h-1zM369 49h1v15h-1zM370 41h1v22h-1zM371 50h1v15h-1zM372 41h1v24h-1zM373 36h1v18h-1zM374 45h1v20h-1zM375 49h1v11h-1zM376 47h1v13h-1zM377 49h1v8h-1zM378 49h1v9h-1zM379 48h1v10h-1zM380 47h1v8h-1zM381 46h1v12h-1zM382 45h1v6h-1zM383 46h1v20h-1zM384 46h1v16h-1zM385 46h1v13h-1zM386 46h1v6h-1zM387 50h1v6h-1zM388 50h1v12h-1zM389 45h1v9h-1zM390 41h1v17h-1zM391 50h1v17h-1zM392 52h1v15h-1zM393 43h1v16h-1zM394 42h1v17h-1zM395 44h1v18h-1zM396 40h1v19h-1zM397 49h1v11h-1zM398 48h1v17h-1zM399 51h1v14h-1zM400 37h1v20h-1zM401 37h1v12h-1zM402 47h1v12h-1zM403 46h1v21h-1zM404 51h1v16h-1zM405 38h1v20h-1zM406 42h1v18h-1zM407 45h1v15h-1zM408 41h1v14h-1zM409 53h1v4h-1zM410 53h1v11h-1zM411 47h1v13h-1zM412 43h1v5h-1zM413 46h1v12h-1zM414 46h1v23h-1zM415 40h1v19h-1zM416 45h1v26h-1zM417 45h1v15h-1zM418 41h1v11h-1zM419 45h1v19h-1zM420 51h1v19h-1zM421 45h1v12h-1zM422 36h1v24h-1zM423 46h1v14h-1zM424 47h1v13h-1zM425 44h1v15h-1zM426 56h1v7h-1zM427 50h1v11h-1zM428 43h1v8h-1zM429 45h1v4h-1zM430 46h1v15h-1zM431 44h1v21h-1zM432 54h1v8h-1zM433 51h1v7h-1zM434 37h1v18h-1zM435 37h1v21h-1zM436 45h1v12h-1zM437 53h1v9h-1zM438 51h1v12h-1zM439 44h1v13h-1zM440 40h1v16h-1zM441 44h1v17h-1zM442 46h1v15h-1zM443 45h1v21h-1zM444 47h1v13h-1zM445 47h1v15h-1zM446 47h1v12h-1zM447 40h1v19h-1zM448 39h1v22h-1zM449 51h1v18h-1zM450 47h1v18h-1zM451 51h1v13h-1zM452 43h1v10h-1zM453 39h1v17h-1zM454 45h1v17h-1zM455 48h1v17h-1zM456 47h1v25h-1zM457 48h1v10h-1zM458 45h1v20h-1zM459 45h1v20h-1zM460 41h1v17h-1zM461 51h1v5h-1zM462 51h1v15h-1zM463 51h1v12h-1zM464 39h1v15h-1zM465 47h1v10h-1zM466 54h1v10h-1zM467 48h1v10h-1zM468 38h1v21h-1zM469 42h1v17h-1zM470 41h1v27h-1zM471 41h1v24h-1zM472 49h1v14h-1zM473 48h1v11h-1zM474 46h1v9h-1zM475 46h1v15h-1zM476 42h1v18h-1zM477 41h1v24h-1zM478 56h1v3h-1zM479 46h1v14h-1zM480 40h1v19h-1zM481 47h1v16h-1zM482 53h1v10h-1zM483 31h1v22h-1zM484 41h1v17h-1zM485 47h1v27h-1zM486 50h1v15h-1zM487 49h1v10h-1zM488 41h1v15h-1z" fill="#263c35"/><path d="M2 53h1v1h-1zM5 53h9v1h-9zM16 53h2v1h-2zM24 53h7v1h-7zM37 53h2v1h-2zM40 53h3v1h-3zM45 53h1v1h-1zM52 53h7v1h-7zM61 53h1v1h-1zM63 53h1v1h-1zM65 53h1v1h-1zM69 53h6v1h-6zM76 53h6v1h-6zM83 53h7v1h-7zM93 53h2v1h-2zM96 53h3v1h-3zM100 53h9v1h-9zM110 53h11v1h-11zM123 53h2v1h-2zM128 53h2v1h-2zM131 53h22v1h-22zM154 53h16v1h-16zM171 53h3v1h-3zM175 53h23v1h-23zM199 53h10v1h-10zM210 53h1v1h-1zM212 53h8v1h-8zM221 53h5v1h-5zM227 53h12v1h-12zM240 53h6v1h-6zM247 53h4v1h-4zM252 53h6v1h-6zM259 53h2v1h-2zM262 53h1v1h-1zM264 53h4v1h-4zM269 53h4v1h-4zM274 53h5v1h-5zM280 53h18v1h-18zM299 53h1v1h-1zM301 53h5v1h-5zM307 53h25v1h-25zM333 53h4v1h-4zM338 53h1v1h-1zM340 53h5v1h-5zM346 53h3v1h-3zM351 53h1v1h-1zM353 53h5v1h-5zM359 53h2v1h-2zM362 53h2v1h-2zM365 53h1v1h-1zM367 53h15v1h-15zM383 53h3v1h-3zM387 53h14v1h-14zM402 53h10v1h-10zM413 53h5v1h-5zM419 53h7v1h-7zM427 53h1v1h-1zM430 53h2v1h-2zM433 53h19v1h-19zM453 53h13v1h-13zM467 53h11v1h-11zM479 53h4v1h-4zM484 53h5v1h-5z" fill="#15211d"/><rect x="0" y="161" width="489" height="1" fill="#c80a0a"/><path d="M0 163h1v14h-1zM1 165h1v6h-1zM2 154h1v25h-1zM3 165h1v14h-1zM4 165h1v16h-1zM5 161h1v24h-1zM6 160h1v6h-1zM7 150h1v23h-1zM8 156h1v14h-1zM9 158h1v9h-1zM10 150h1v16h-1zM11 141h1v22h-1zM12 146h1v20h-1zM13 146h1v25h-1zM14 150h1v11h-1zM15 141h1v20h-1zM16 137h1v25h-1zM17 139h1v24h-1zM18 142h1v14h-1zM19 142h1v18h-1zM20 143h1v16h-1zM21 147h1v9h-1zM22 146h1v11h-1zM23 144h1v17h-1zM24 146h1v18h-1zM25 148h1v14h-1zM26 157h1v10h-1zM27 157h1v15h-1zM28 157h1v14h-1zM29 157h1v16h-1zM30 150h1v20h-1zM31 168h1v10h-1zM32 167h1v15h-1zM33 167h1v17h-1zM34 161h1v13h-1zM35 158h1v14h-1zM36 164h1v20h-1zM37 161h1v15h-1zM38 157h1v16h-1zM39 164h1v15h-1zM40 157h1v19h-1zM41 154h1v9h-1zM42 142h1v22h-1zM43 143h1v17h-1zM44 137h1v22h-1zM45 137h1v31h-1zM46 145h1v10h-1zM47 140h1v15h-1zM48 139h1v10h-1zM49 141h1v11h-1zM50 141h1v16h-1zM51 142h1v11h-1zM52 149h1v13h-1zM53 151h1v13h-1zM54 151h1v14h-1zM55 151h1v21h-1zM56 158h1v18h-1zM57 161h1v12h-1zM58 158h1v18h-1zM59 163h1v15h-1zM60 163h1v13h-1zM61 160h1v18h-1zM62 162h1v12h-1zM63 160h1v24h-1zM64 165h1v16h-1zM65 160h1v13h-1zM66 165h1v8h-1zM67 164h1v8h-1zM68 164h1v12h-1zM69 158h1v12h-1zM70 156h1v8h-1zM71 159h1v11h-1zM72 153h1v23h-1zM73 152h1v11h-1zM74 145h1v18h-1zM75 148h1v17h-1zM76 154h1v12h-1zM77 143h1v32h-1zM78 143h1v24h-1zM79 145h1v22h-1zM80 144h1v22h-1zM81 145h1v21h-1zM82 144h1v16h-1zM83 144h1v25h-1zM84 149h1v26h-1zM85 157h1v11h-1zM86 144h1v24h-1zM87 150h1v16h-1zM88 158h1v18h-1zM89 160h1v13h-1zM90 162h1v11h-1zM91 165h1v6h-1zM92 165h1v9h-1zM93 153h1v16h-1zM94 158h1v20h-1zM95 163h1v17h-1zM96 155h1v27h-1zM97 155h1v18h-1zM98 157h1v12h-1zM99 164h1v5h-1zM100 150h1v22h-1zM101 155h1v17h-1zM102 154h1v19h-1zM103 150h1v23h-1zM104 159h1v6h-1zM105 156h1v14h-1zM106 147h1v23h-1zM107 152h1v18h-1zM108 146h1v24h-1zM109 146h1v14h-1zM110 146h1v20h-1zM111 152h1v14h-1zM112 144h1v20h-1zM113 156h1v8h-1zM114 151h1v14h-1zM115 151h1v13h-1zM116 146h1v20h-1zM117 144h1v22h-1zM118 160h1v10h-1zM119 151h1v16h-1zM120 160h1v25h-1zM121 163h1v22h-1zM122 163h1v7h-1zM123 157h1v20h-1zM124 155h1v23h-1zM125 164h1v15h-1zM126 163h1v15h-1zM127 163h1v13h-1zM128 160h1v12h-1zM129 160h1v9h-1zM130 166h1v3h-1zM131 155h1v20h-1zM132 153h1v17h-1zM133 150h1v12h-1zM134 155h1v20h-1zM135 159h1v10h-1zM136 145h1v20h-1zM137 144h1v22h-1zM138 147h1v22h-1zM139 150h1v16h-1zM140 146h1v20h-1zM141 151h1v11h-1zM142 154h1v23h-1zM143 147h1v20h-1zM144 147h1v19h-1zM145 156h1v10h-1zM146 156h1v10h-1zM147 150h1v20h-1zM148 149h1v18h-1zM149 149h1v18h-1zM150 159h1v11h-1zM151 159h1v16h-1zM152 151h1v24h-1zM153 162h1v18h-1zM154 149h1v26h-1zM155 157h1v10h-1zM156 156h1v21h-1zM157 158h1v20h-1zM158 157h1v15h-1zM159 156h1v12h-1zM160 158h1v9h-1zM161 152h1v13h-1zM162 158h1v11h-1zM163 158h1v18h-1zM164 149h1v23h-1zM165 145h1v27h-1zM166 156h1v11h-1zM167 156h1v13h-1zM168 148h1v18h-1zM169 157h1v13h-1zM170 164h1v9h-1zM171 149h1v22h-1zM172 152h1v13h-1zM173 151h1v15h-1zM174 163h1v7h-1zM175 159h1v9h-1zM176 154h1v12h-1zM177 150h1v18h-1zM178 154h1v9h-1zM179 155h1v20h-1zM180 145h1v23h-1zM181 150h1v25h-1zM182 159h1v6h-1zM183 147h1v21h-1zM184 151h1v16h-1zM185 149h1v21h-1zM186 149h1v23h-1zM187 157h1v22h-1zM188 157h1v18h-1zM189 153h1v15h-1zM190 150h1v13h-1zM191 148h1v20h-1zM192 159h1v14h-1zM193 157h1v15h-1zM194 154h1v14h-1zM195 149h1v16h-1zM196 149h1v14h-1zM197 160h1v7h-1zM198 163h1v6h-1zM199 150h1v16h-1zM200 151h1v15h-1zM201 147h1v16h-1zM202 159h1v13h-1zM203 154h1v18h-1zM204 152h1v20h-1zM205 159h1v12h-1zM206 152h1v11h-1zM207 153h1v17h-1zM208 151h1v21h-1zM209 164h1v11h-1zM210 158h1v17h-1zM211 152h1v9h-1zM212 150h1v17h-1zM213 148h1v16h-1zM214 159h1v10h-1zM215 154h1v23h-1zM216 146h1v23h-1zM217 151h1v16h-1zM218 151h1v18h-1zM219 157h1v9h-1zM220 148h1v13h-1zM221 154h1v16h-1zM222 158h1v14h-1zM223 156h1v13h-1zM224 154h1v15h-1zM225 155h1v14h-1zM226 151h1v9h-1zM227 146h1v24h-1zM228 159h1v19h-1zM229 158h1v17h-1zM230 151h1v15h-1zM231 151h1v17h-1zM232 142h1v24h-1zM233 147h1v15h-1zM234 153h1v11h-1zM235 159h1v10h-1zM236 154h1v13h-1zM237 160h1v9h-1zM238 154h1v20h-1zM239 147h1v9h-1zM240 147h1v23h-1zM241 157h1v13h-1zM242 160h1v11h-1zM243 154h1v13h-1zM244 154h1v14h-1zM245 160h1v6h-1zM246 147h1v13h-1zM247 151h1v17h-1zM248 151h1v21h-1zM249 158h1v20h-1zM250 155h1v11h-1zM251 152h1v7h-1zM252 151h1v14h-1zM253 151h1v17h-1zM254 147h1v30h-1zM255 153h1v22h-1zM256 153h1v24h-1zM257 148h1v16h-1zM258 150h1v9h-1zM259 147h1v20h-1zM260 158h1v16h-1zM261 162h1v13h-1zM262 156h1v11h-1zM263 155h1v5h-1zM264 152h1v11h-1zM265 152h1v14h-1zM266 152h1v19h-1zM267 154h1v20h-1zM268 162h1v6h-1zM269 155h1v13h-1zM270 155h1v7h-1zM271 151h1v12h-1zM272 156h1v14h-1zM273 162h1v15h-1zM274 158h1v12h-1zM275 156h1v8h-1zM276 154h1v13h-1zM277 157h1v11h-1zM278 147h1v17h-1zM279 147h1v13h-1zM280 160h1v18h-1zM281 157h1v14h-1zM282 151h1v26h-1zM283 152h1v15h-1zM284 148h1v21h-1zM285 154h1v11h-1zM286 156h1v13h-1zM287 156h1v14h-1zM288 147h1v15h-1zM289 153h1v21h-1zM290 159h1v17h-1zM291 149h1v27h-1zM292 152h1v12h-1zM293 158h1v12h-1zM294 151h1v18h-1zM295 149h1v24h-1zM296 161h1v13h-1zM297 154h1v20h-1zM298 145h1v10h-1zM299 145h1v20h-1zM300 162h1v5h-1zM301 158h1v8h-1zM302 158h1v8h-1zM303 159h1v8h-1zM304 154h1v10h-1zM305 154h1v10h-1zM306 163h1v2h-1zM307 158h1v13h-1zM308 151h1v16h-1zM309 154h1v12h-1zM310 159h1v6h-1zM311 150h1v13h-1zM312 156h1v14h-1zM313 160h1v10h-1zM314 153h1v13h-1zM315 151h1v13h-1zM316 149h1v19h-1zM317 160h1v8h-1zM318 153h1v12h-1zM319 155h1v7h-1zM320 157h1v13h-1zM321 158h1v7h-1zM322 154h1v10h-1zM323 153h1v11h-1zM324 156h1v9h-1zM325 158h1v9h-1zM326 158h1v4h-1zM327 160h1v11h-1zM328 154h1v17h-1zM329 153h1v16h-1zM330 150h1v17h-1zM331 151h1v20h-1zM332 162h1v6h-1zM333 148h1v18h-1zM334 152h1v18h-1zM335 158h1v9h-1zM336 153h1v11h-1zM337 147h1v14h-1zM338 154h1v20h-1zM339 164h1v10h-1zM340 155h1v20h-1zM341 153h1v19h-1zM342 153h1v17h-1zM343 152h1v11h-1zM344 152h1v15h-1zM345 160h1v11h-1zM346 158h1v11h-1zM347 155h1v13h-1zM348 158h1v11h-1zM349 148h1v11h-1zM350 145h1v12h-1zM351 146h1v25h-1zM352 162h1v13h-1zM353 156h1v12h-1zM354 152h1v10h-1zM355 151h1v13h-1zM356 150h1v14h-1zM357 153h1v18h-1zM358 167h1v5h-1zM359 161h1v16h-1zM360 151h1v14h-1zM361 148h1v8h-1zM362 151h1v16h-1zM363 155h1v14h-1zM364 166h1v11h-1zM365 153h1v22h-1zM366 143h1v16h-1zM367 152h1v22h-1zM368 151h1v11h-1zM369 157h1v15h-1zM370 155h1v16h-1zM371 162h1v11h-1zM372 149h1v24h-1zM373 146h1v16h-1zM374 153h1v20h-1zM375 157h1v11h-1zM376 155h1v13h-1zM377 157h1v8h-1zM378 151h1v15h-1zM379 156h1v10h-1zM380 155h1v8h-1zM381 154h1v12h-1zM382 153h1v6h-1zM383 154h1v20h-1zM384 154h1v24h-1zM385 154h1v13h-1zM386 154h1v6h-1zM387 158h1v6h-1zM388 158h1v12h-1zM389 153h1v9h-1zM390 149h1v17h-1zM391 158h1v17h-1zM392 160h1v15h-1zM393 151h1v16h-1zM394 150h1v17h-1zM395 152h1v18h-1zM396 148h1v19h-1zM397 157h1v11h-1zM398 156h1v17h-1zM399 156h1v17h-1zM400 149h1v16h-1zM401 145h1v12h-1zM402 155h1v12h-1zM403 154h1v21h-1zM404 159h1v16h-1zM405 152h1v14h-1zM406 150h1v18h-1zM407 153h1v15h-1zM408 149h1v14h-1zM409 161h1v4h-1zM410 156h1v16h-1zM411 155h1v13h-1zM412 151h1v5h-1zM413 154h1v12h-1zM414 154h1v23h-1zM415 148h1v19h-1zM416 153h1v26h-1zM417 153h1v21h-1zM418 149h1v11h-1zM419 150h1v22h-1zM420 159h1v19h-1zM421 153h1v12h-1zM422 144h1v24h-1zM423 154h1v14h-1zM424 155h1v17h-1zM425 152h1v23h-1zM426 164h1v7h-1zM427 158h1v11h-1zM428 151h1v8h-1zM429 153h1v4h-1zM430 154h1v15h-1zM431 152h1v21h-1zM432 162h1v8h-1zM433 159h1v7h-1zM434 145h1v21h-1zM435 140h1v26h-1zM436 153h1v12h-1zM437 161h1v9h-1zM438 159h1v12h-1zM439 152h1v13h-1zM440 148h1v16h-1zM441 152h1v17h-1zM442 154h1v15h-1zM443 153h1v21h-1zM444 155h1v13h-1zM445 155h1v15h-1zM446 155h1v12h-1zM447 148h1v19h-1zM448 147h1v22h-1zM449 159h1v18h-1zM450 155h1v18h-1zM451 159h1v13h-1zM452 151h1v10h-1zM453 147h1v17h-1zM454 153h1v17h-1zM455 156h1v17h-1zM456 155h1v25h-1zM457 156h1v10h-1zM458 153h1v20h-1zM459 153h1v20h-1zM460 149h1v17h-1zM461 159h1v7h-1zM462 159h1v15h-1zM463 159h1v12h-1zM464 147h1v15h-1zM465 155h1v10h-1zM466 162h1v10h-1zM467 156h1v10h-1zM468 146h1v21h-1zM469 150h1v22h-1zM470 149h1v27h-1zM471 149h1v17h-1zM472 157h1v14h-1zM473 156h1v11h-1zM474 154h1v9h-1zM475 154h1v15h-1zM476 150h1v18h-1zM477 149h1v24h-1zM478 164h1v3h-1zM479 154h1v14h-1zM480 148h1v19h-1zM481 155h1v16h-1zM482 161h1v10h-1zM483 146h1v15h-1zM484 149h1v17h-1zM485 155h1v20h-1zM486 158h1v15h-1zM487 157h1v10h-1zM488 151h1v18h-1z" fill="#263c35"/><path d="M2 161h1v1h-1zM5 161h9v1h-9zM16 161h2v1h-2zM24 161h7v1h-7zM34 161h2v1h-2zM37 161h2v1h-2zM40 161h3v1h-3zM45 161h1v1h-1zM52 161h7v1h-7zM61 161h1v1h-1zM63 161h1v1h-1zM65 161h1v1h-1zM69 161h13v1h-13zM83 161h7v1h-7zM93 161h2v1h-2zM96 161h3v1h-3zM100 161h9v1h-9zM110 161h11v1h-11zM123 161h2v1h-2zM128 161h2v1h-2zM131 161h22v1h-22zM154 161h16v1h-16zM171 161h3v1h-3zM175 161h23v1h-23zM199 161h10v1h-10zM210 161h1v1h-1zM212 161h8v1h-8zM221 161h5v1h-5zM227 161h12v1h-12zM240 161h6v1h-6zM247 161h4v1h-4zM252 161h6v1h-6zM259 161h2v1h-2zM262 161h1v1h-1zM264 161h4v1h-4zM269 161h4v1h-4zM274 161h5v1h-5zM280 161h18v1h-18zM299 161h1v1h-1zM301 161h5v1h-5zM307 161h25v1h-25zM333 161h4v1h-4zM338 161h1v1h-1zM340 161h9v1h-9zM351 161h1v1h-1zM353 161h5v1h-5zM359 161h2v1h-2zM362 161h2v1h-2zM365 161h1v1h-1zM367 161h4v1h-4zM372 161h10v1h-10zM383 161h3v1h-3zM387 161h14v1h-14zM402 161h10v1h-10zM413 161h5v1h-5zM419 161h7v1h-7zM427 161h1v1h-1zM430 161h2v1h-2zM433 161h19v1h-19zM453 161h13v1h-13zM467 161h11v1h-11zM479 161h4v1h-4zM484 161h5v1h-5z" fill="#15211d"/></svg>
<div class="a" style="left:681px;top:282px;width:125px;height:26px;background:rgba(66,66,66,.93);border:1px solid #3a3a3a"></div>
<div class="a" style="left:682px;top:283px;width:8px;height:24px;background:rgba(120,120,120,.75)"></div>
<svg style="left:681px;top:282px" width="125" height="26" viewBox="0 0 125 26"><rect x="3" y="8" width="1" height="1" fill="#e0e0e0"/><rect x="5" y="8" width="1" height="1" fill="#e0e0e0"/><rect x="3" y="10" width="1" height="1" fill="#e0e0e0"/><rect x="5" y="10" width="1" height="1" fill="#e0e0e0"/><rect x="3" y="12" width="1" height="1" fill="#e0e0e0"/><rect x="5" y="12" width="1" height="1" fill="#e0e0e0"/><rect x="3" y="14" width="1" height="1" fill="#e0e0e0"/><rect x="5" y="14" width="1" height="1" fill="#e0e0e0"/><rect x="3" y="16" width="1" height="1" fill="#e0e0e0"/><rect x="5" y="16" width="1" height="1" fill="#e0e0e0"/><rect x="3" y="18" width="1" height="1" fill="#e0e0e0"/><rect x="5" y="18" width="1" height="1" fill="#e0e0e0"/><rect x="12" y="16" width="1.200" height="2" fill="#a8a8a8"/><rect x="14" y="15" width="1.200" height="3" fill="#a8a8a8"/><rect x="16" y="14" width="1.200" height="4" fill="#a8a8a8"/><rect x="18" y="12" width="1.200" height="6" fill="#a8a8a8"/><rect x="20" y="10" width="1.200" height="8" fill="#a8a8a8"/><rect x="22" y="8" width="1.200" height="10" fill="#a8a8a8"/><rect x="24" y="4" width="1.200" height="14" fill="#a8a8a8"/><circle cx="40.500" cy="12.500" r="7.600" fill="none" stroke="#8a8a8a" stroke-width="1.900"/><path d="M40.500 4.500v8" stroke="#8a8a8a" stroke-width="1.900"/><rect x="106" y="3" width="1" height="20" fill="#6a6a6a"/><g transform="translate(116.500 12.500) rotate(45)" fill="#bdbdbd"><rect x="-1.800" y="-5.500" width="3.600" height="4.500"/><rect x="-3" y="-1.500" width="6" height="1.600"/><path d="M-.7 0h1.400l-.3 6h-.8z"/></g></svg>
<div class="t" style="left:735px;top:287px;font-size:11.500px;font-weight:bold;color:#2f8fe9">+0</div>
<div class="t" style="left:751px;top:287px;font-size:11.500px;color:#8c8c8c">dB</div>
<div class="a" style="left:989px;top:186px;width:74px;height:649px;background:#232323;border-top:1px solid #000;border-right:1px solid #000"></div>
<svg style="left:989px;top:187px" width="74" height="647" viewBox="0 0 74 647" shape-rendering="crispEdges"><rect x="0" y="53" width="4" height="1" fill="#c4c4c4"/><rect x="0" y="34" width="4" height="1" fill="#c4c4c4"/><rect x="0" y="72" width="4" height="1" fill="#c4c4c4"/><rect x="0" y="15" width="4" height="1" fill="#c4c4c4"/><rect x="0" y="91" width="4" height="1" fill="#c4c4c4"/><rect x="0" y="0" width="4" height="1" fill="#c4c4c4"/><rect x="0" y="106" width="4" height="1" fill="#c4c4c4"/><rect x="0" y="5" width="2" height="1" fill="#c4c4c4"/><rect x="0" y="11" width="2" height="1" fill="#c4c4c4"/><rect x="0" y="19" width="2" height="1" fill="#c4c4c4"/><rect x="0" y="23" width="2" height="1" fill="#c4c4c4"/><rect x="0" y="26" width="2" height="1" fill="#c4c4c4"/><rect x="0" y="29" width="2" height="1" fill="#c4c4c4"/><rect x="0" y="32" width="2" height="1" fill="#c4c4c4"/><rect x="0" y="74" width="2" height="1" fill="#c4c4c4"/><rect x="0" y="77" width="2" height="1" fill="#c4c4c4"/><rect x="0" y="80" width="2" height="1" fill="#c4c4c4"/><rect x="0" y="83" width="2" height="1" fill="#c4c4c4"/><rect x="0" y="87" width="2" height="1" fill="#c4c4c4"/><rect x="0" y="95" width="2" height="1" fill="#c4c4c4"/><rect x="0" y="101" width="2" height="1" fill="#c4c4c4"/><rect x="0" y="107" width="74" height="1" fill="#000"/><rect x="0" y="161" width="4" height="1" fill="#c4c4c4"/><rect x="0" y="142" width="4" height="1" fill="#c4c4c4"/><rect x="0" y="180" width="4" height="1" fill="#c4c4c4"/><rect x="0" y="123" width="4" height="1" fill="#c4c4c4"/><rect x="0" y="199" width="4" height="1" fill="#c4c4c4"/><rect x="0" y="108" width="4" height="1" fill="#c4c4c4"/><rect x="0" y="214" width="4" height="1" fill="#c4c4c4"/><rect x="0" y="113" width="2" height="1" fill="#c4c4c4"/><rect x="0" y="119" width="2" height="1" fill="#c4c4c4"/><rect x="0" y="127" width="2" height="1" fill="#c4c4c4"/><rect x="0" y="131" width="2" height="1" fill="#c4c4c4"/><rect x="0" y="134" width="2" height="1" fill="#c4c4c4"/><rect x="0" y="137" width="2" height="1" fill="#c4c4c4"/><rect x="0" y="140" width="2" height="1" fill="#c4c4c4"/><rect x="0" y="182" width="2" height="1" fill="#c4c4c4"/><rect x="0" y="185" width="2" height="1" fill="#c4c4c4"/><rect x="0" y="188" width="2" height="1" fill="#c4c4c4"/><rect x="0" y="191" width="2" height="1" fill="#c4c4c4"/><rect x="0" y="195" width="2" height="1" fill="#c4c4c4"/><rect x="0" y="203" width="2" height="1" fill="#c4c4c4"/><rect x="0" y="209" width="2" height="1" fill="#c4c4c4"/><rect x="0" y="215" width="74" height="1" fill="#000"/><rect x="0" y="269" width="4" height="1" fill="#c4c4c4"/><rect x="0" y="250" width="4" height="1" fill="#c4c4c4"/><rect x="0" y="288" width="4" height="1" fill="#c4c4c4"/><rect x="0" y="231" width="4" height="1" fill="#c4c4c4"/><rect x="0" y="307" width="4" height="1" fill="#c4c4c4"/><rect x="0" y="216" width="4" height="1" fill="#c4c4c4"/><rect x="0" y="322" width="4" height="1" fill="#c4c4c4"/><rect x="0" y="221" width="2" height="1" fill="#c4c4c4"/><rect x="0" y="227" width="2" height="1" fill="#c4c4c4"/><rect x="0" y="235" width="2" height="1" fill="#c4c4c4"/><rect x="0" y="239" width="2" height="1" fill="#c4c4c4"/><rect x="0" y="242" width="2" height="1" fill="#c4c4c4"/><rect x="0" y="245" width="2" height="1" fill="#c4c4c4"/><rect x="0" y="248" width="2" height="1" fill="#c4c4c4"/><rect x="0" y="290" width="2" height="1" fill="#c4c4c4"/><rect x="0" y="293" width="2" height="1" fill="#c4c4c4"/><rect x="0" y="296" width="2" height="1" fill="#c4c4c4"/><rect x="0" y="299" width="2" height="1" fill="#c4c4c4"/><rect x="0" y="303" width="2" height="1" fill="#c4c4c4"/><rect x="0" y="311" width="2" height="1" fill="#c4c4c4"/><rect x="0" y="317" width="2" height="1" fill="#c4c4c4"/><rect x="0" y="323" width="74" height="1" fill="#000"/><rect x="0" y="377" width="4" height="1" fill="#c4c4c4"/><rect x="0" y="358" width="4" height="1" fill="#c4c4c4"/><rect x="0" y="396" width="4" height="1" fill="#c4c4c4"/><rect x="0" y="339" width="4" height="1" fill="#c4c4c4"/><rect x="0" y="415" width="4" height="1" fill="#c4c4c4"/><rect x="0" y="324" width="4" height="1" fill="#c4c4c4"/><rect x="0" y="430" width="4" height="1" fill="#c4c4c4"/><rect x="0" y="329" width="2" height="1" fill="#c4c4c4"/><rect x="0" y="335" width="2" height="1" fill="#c4c4c4"/><rect x="0" y="343" width="2" height="1" fill="#c4c4c4"/><rect x="0" y="347" width="2" height="1" fill="#c4c4c4"/><rect x="0" y="350" width="2" height="1" fill="#c4c4c4"/><rect x="0" y="353" width="2" height="1" fill="#c4c4c4"/><rect x="0" y="356" width="2" height="1" fill="#c4c4c4"/><rect x="0" y="398" width="2" height="1" fill="#c4c4c4"/><rect x="0" y="401" width="2" height="1" fill="#c4c4c4"/><rect x="0" y="404" width="2" height="1" fill="#c4c4c4"/><rect x="0" y="407" width="2" height="1" fill="#c4c4c4"/><rect x="0" y="411" width="2" height="1" fill="#c4c4c4"/><rect x="0" y="419" width="2" height="1" fill="#c4c4c4"/><rect x="0" y="425" width="2" height="1" fill="#c4c4c4"/><rect x="0" y="431" width="74" height="1" fill="#000"/><rect x="0" y="485" width="4" height="1" fill="#c4c4c4"/><rect x="0" y="466" width="4" height="1" fill="#c4c4c4"/><rect x="0" y="504" width="4" height="1" fill="#c4c4c4"/><rect x="0" y="447" width="4" height="1" fill="#c4c4c4"/><rect x="0" y="523" width="4" height="1" fill="#c4c4c4"/><rect x="0" y="432" width="4" height="1" fill="#c4c4c4"/><rect x="0" y="538" width="4" height="1" fill="#c4c4c4"/><rect x="0" y="437" width="2" height="1" fill="#c4c4c4"/><rect x="0" y="443" width="2" height="1" fill="#c4c4c4"/><rect x="0" y="451" width="2" height="1" fill="#c4c4c4"/><rect x="0" y="455" width="2" height="1" fill="#c4c4c4"/><rect x="0" y="458" width="2" height="1" fill="#c4c4c4"/><rect x="0" y="461" width="2" height="1" fill="#c4c4c4"/><rect x="0" y="464" width="2" height="1" fill="#c4c4c4"/><rect x="0" y="506" width="2" height="1" fill="#c4c4c4"/><rect x="0" y="509" width="2" height="1" fill="#c4c4c4"/><rect x="0" y="512" width="2" height="1" fill="#c4c4c4"/><rect x="0" y="515" width="2" height="1" fill="#c4c4c4"/><rect x="0" y="519" width="2" height="1" fill="#c4c4c4"/><rect x="0" y="527" width="2" height="1" fill="#c4c4c4"/><rect x="0" y="533" width="2" height="1" fill="#c4c4c4"/><rect x="0" y="539" width="74" height="1" fill="#000"/><rect x="0" y="593" width="4" height="1" fill="#c4c4c4"/><rect x="0" y="574" width="4" height="1" fill="#c4c4c4"/><rect x="0" y="612" width="4" height="1" fill="#c4c4c4"/><rect x="0" y="555" width="4" height="1" fill="#c4c4c4"/><rect x="0" y="631" width="4" height="1" fill="#c4c4c4"/><rect x="0" y="540" width="4" height="1" fill="#c4c4c4"/><rect x="0" y="646" width="4" height="1" fill="#c4c4c4"/><rect x="0" y="545" width="2" height="1" fill="#c4c4c4"/><rect x="0" y="551" width="2" height="1" fill="#c4c4c4"/><rect x="0" y="559" width="2" height="1" fill="#c4c4c4"/><rect x="0" y="563" width="2" height="1" fill="#c4c4c4"/><rect x="0" y="566" width="2" height="1" fill="#c4c4c4"/><rect x="0" y="569" width="2" height="1" fill="#c4c4c4"/><rect x="0" y="572" width="2" height="1" fill="#c4c4c4"/><rect x="0" y="614" width="2" height="1" fill="#c4c4c4"/><rect x="0" y="617" width="2" height="1" fill="#c4c4c4"/><rect x="0" y="620" width="2" height="1" fill="#c4c4c4"/><rect x="0" y="623" width="2" height="1" fill="#c4c4c4"/><rect x="0" y="627" width="2" height="1" fill="#c4c4c4"/><rect x="0" y="635" width="2" height="1" fill="#c4c4c4"/><rect x="0" y="641" width="2" height="1" fill="#c4c4c4"/></svg>
<div class="t dbl" style="left:997px;top:187px">dB</div>
<div class="t dbl" style="left:997px;top:213px">-9</div>
<div class="t dbl" style="left:997px;top:232px">-∞</div>
<div class="t dbl" style="left:997px;top:251px">-9</div>
<div class="t dbl" style="left:997px;top:270px">-3</div>
<div class="a" style="left:1038px;top:233px;width:22px;height:17px;background:#1a1a1a;border:1px solid #2e2e2e;border-radius:3px"></div>
<div class="t bl" style="left:1038px;top:233px;width:22px;height:17px;line-height:17px;text-align:center;font-size:11px;font-weight:bold;letter-spacing:0px">L</div>
<div class="t dbl" style="left:997px;top:295px">dB</div>
<div class="t dbl" style="left:997px;top:321px">-9</div>
<div class="t dbl" style="left:997px;top:340px">-∞</div>
<div class="t dbl" style="left:997px;top:359px">-9</div>
<div class="t dbl" style="left:997px;top:378px">-3</div>
<div class="a" style="left:1038px;top:341px;width:22px;height:17px;background:#1a1a1a;border:1px solid #2e2e2e;border-radius:3px"></div>
<div class="t bl" style="left:1038px;top:341px;width:22px;height:17px;line-height:17px;text-align:center;font-size:11px;font-weight:bold;letter-spacing:0px">R</div>
<div class="t dbl" style="left:997px;top:403px">dB</div>
<div class="t dbl" style="left:997px;top:429px">-9</div>
<div class="t dbl" style="left:997px;top:448px">-∞</div>
<div class="t dbl" style="left:997px;top:467px">-9</div>
<div class="t dbl" style="left:997px;top:486px">-3</div>
<div class="a" style="left:1038px;top:449px;width:22px;height:17px;background:#1a1a1a;border:1px solid #2e2e2e;border-radius:3px"></div>
<div class="t bl" style="left:1038px;top:449px;width:22px;height:17px;line-height:17px;text-align:center;font-size:11px;font-weight:bold;letter-spacing:0px">C</div>
<div class="t dbl" style="left:997px;top:511px">dB</div>
<div class="t dbl" style="left:997px;top:537px">-9</div>
<div class="t dbl" style="left:997px;top:556px">-∞</div>
<div class="t dbl" style="left:997px;top:575px">-9</div>
<div class="t dbl" style="left:997px;top:594px">-3</div>
<div class="a" style="left:1038px;top:557px;width:22px;height:17px;background:#1a1a1a;border:1px solid #2e2e2e;border-radius:3px"></div>
<div class="t bl" style="left:1038px;top:557px;width:22px;height:17px;line-height:17px;text-align:center;font-size:9.5px;font-weight:bold;letter-spacing:-0.6px">LFE</div>
<div class="t dbl" style="left:997px;top:619px">dB</div>
<div class="t dbl" style="left:997px;top:645px">-9</div>
<div class="t dbl" style="left:997px;top:664px">-∞</div>
<div class="t dbl" style="left:997px;top:683px">-9</div>
<div class="t dbl" style="left:997px;top:702px">-3</div>
<div class="a" style="left:1038px;top:665px;width:22px;height:17px;background:#1a1a1a;border:1px solid #2e2e2e;border-radius:3px"></div>
<div class="t bl" style="left:1038px;top:665px;width:22px;height:17px;line-height:17px;text-align:center;font-size:10.5px;font-weight:bold;letter-spacing:-0.3px">Ls</div>
<div class="t dbl" style="left:997px;top:727px">dB</div>
<div class="t dbl" style="left:997px;top:753px">-9</div>
<div class="t dbl" style="left:997px;top:772px">-∞</div>
<div class="t dbl" style="left:997px;top:791px">-9</div>
<div class="t dbl" style="left:997px;top:810px">-3</div>
<div class="a" style="left:1038px;top:773px;width:22px;height:17px;background:#1a1a1a;border:1px solid #2e2e2e;border-radius:3px"></div>
<div class="t bl" style="left:1038px;top:773px;width:22px;height:17px;line-height:17px;text-align:center;font-size:10.5px;font-weight:bold;letter-spacing:-0.3px">Rs</div>
<div class="a" style="left:499px;top:845px;width:563px;height:9px;background:#303030"></div>
<div class="a" style="left:498px;top:854px;width:565px;height:1px;background:#000"></div>
<div class="a" style="left:1062px;top:834px;width:1px;height:21px;background:#000"></div>
<svg style="left:769px;top:847px" width="24" height="4" viewBox="0 0 24 4" shape-rendering="crispEdges"><rect x="0" y="0" width="1" height="1" fill="#b4b4b4"/><rect x="0" y="2" width="1" height="1" fill="#b4b4b4"/><rect x="2" y="0" width="1" height="1" fill="#b4b4b4"/><rect x="2" y="2" width="1" height="1" fill="#b4b4b4"/><rect x="4" y="0" width="1" height="1" fill="#b4b4b4"/><rect x="4" y="2" width="1" height="1" fill="#b4b4b4"/><rect x="6" y="0" width="1" height="1" fill="#b4b4b4"/><rect x="6" y="2" width="1" height="1" fill="#b4b4b4"/><rect x="8" y="0" width="1" height="1" fill="#b4b4b4"/><rect x="8" y="2" width="1" height="1" fill="#b4b4b4"/><rect x="10" y="0" width="1" height="1" fill="#b4b4b4"/><rect x="10" y="2" width="1" height="1" fill="#b4b4b4"/><rect x="12" y="0" width="1" height="1" fill="#b4b4b4"/><rect x="12" y="2" width="1" height="1" fill="#b4b4b4"/><rect x="14" y="0" width="1" height="1" fill="#b4b4b4"/><rect x="14" y="2" width="1" height="1" fill="#b4b4b4"/><rect x="16" y="0" width="1" height="1" fill="#b4b4b4"/><rect x="16" y="2" width="1" height="1" fill="#b4b4b4"/><rect x="18" y="0" width="1" height="1" fill="#b4b4b4"/><rect x="18" y="2" width="1" height="1" fill="#b4b4b4"/><rect x="20" y="0" width="1" height="1" fill="#b4b4b4"/><rect x="20" y="2" width="1" height="1" fill="#b4b4b4"/><rect x="22" y="0" width="1" height="1" fill="#b4b4b4"/><rect x="22" y="2" width="1" height="1" fill="#b4b4b4"/></svg>
<svg style="left:1039px;top:848px" width="6" height="4" viewBox="0 0 6 4"><path d="M0 3.500l3-3.500 3 3.500z" fill="#8a8a8a"/></svg>
<!-- TRANSPORT -->
<div class="t bl" id="bigtime" style="left:502px;top:865px;font-size:16.500px;line-height:20px;height:20px;letter-spacing:-.28px;-webkit-text-stroke:.3px #2f8fe9">0:00.000</div>
<svg style="left:644px;top:868px" width="10" height="10" viewBox="0 0 10 10"><rect x="0" y="0" width="9" height="9" fill="#5c5c5c"/></svg>
<svg style="left:674px;top:867px" width="11" height="12" viewBox="0 0 11 12"><path d="M0 0l10 5.500L0 11z" fill="#b4b4b4"/></svg>
<svg style="left:705px;top:868px" width="9" height="10" viewBox="0 0 9 10"><rect x="0" y="0" width="2.500" height="10" fill="#5c5c5c"/><rect x="5" y="0" width="2.500" height="10" fill="#5c5c5c"/></svg>
<svg style="left:733px;top:868px" width="12" height="10" viewBox="0 0 12 10"><rect x="0" y="0" width="2" height="10" fill="#b4b4b4"/><path d="M11 0v10L3 5z" fill="#b4b4b4"/></svg>
<svg style="left:762px;top:869px" width="15" height="8" viewBox="0 0 15 8"><path d="M7 0v8L0 4zM15 0v8L8 4z" fill="#b4b4b4"/></svg>
<svg style="left:791px;top:869px" width="15" height="8" viewBox="0 0 15 8"><path d="M0 0v8l7-4zM8 0v8l7-4z" fill="#b4b4b4"/></svg>
<svg style="left:823px;top:868px" width="12" height="10" viewBox="0 0 12 10"><rect x="9.500" y="0" width="2" height="10" fill="#b4b4b4"/><path d="M0 0v10l8-5z" fill="#b4b4b4"/></svg>
<svg style="left:853px;top:867px" width="12" height="12" viewBox="0 0 12 12"><circle cx="6" cy="6" r="5.100" fill="#ee3238"/></svg>
<svg style="left:882px;top:866px" width="15" height="13" viewBox="0 0 15 13"><path d="M1 7v5h12V8.500" stroke="#b4b4b4" stroke-width="1.800" fill="none"/><path d="M4 9.500V5.200h4.500" stroke="#b4b4b4" stroke-width="1.800" fill="none"/><path d="M8 1.500l5 3.700-5 3.700z" fill="#b4b4b4"/></svg>
<svg style="left:911px;top:867px" width="17" height="12" viewBox="0 0 17 12"><path d="M4 1L1 6l3 5M8 1L11 6l-3 5" stroke="#b4b4b4" stroke-width="1.500" fill="none"/><path d="M6 6h6" stroke="#b4b4b4" stroke-width="1.600"/><path d="M11 2.500l5 3.500-5 3.500z" fill="#b4b4b4"/></svg>
<svg style="left:951px;top:864px" width="18" height="19" viewBox="0 0 18 19"><path d="M2.500 2.500v13" stroke="#b4b4b4" stroke-width="1.200"/><path d="M2.500 1l2.500 3h-5zM2.500 17l2.500-3h-5z" fill="#b4b4b4"/><circle cx="10" cy="9" r="3.800" fill="none" stroke="#b4b4b4" stroke-width="1.200"/><path d="M8 9h4" stroke="#b4b4b4" stroke-width=".9"/><path d="M12.8 11.8l4 4" stroke="#b4b4b4" stroke-width="1.800"/><path d="M10 7v4" stroke="#b4b4b4" stroke-width="1"/></svg>
<svg style="left:981px;top:864px" width="18" height="19" viewBox="0 0 18 19"><path d="M2.500 2.500v13" stroke="#b4b4b4" stroke-width="1.200"/><path d="M2.500 1l2.500 3h-5zM2.500 17l2.500-3h-5z" fill="#b4b4b4"/><circle cx="10" cy="9" r="3.800" fill="none" stroke="#b4b4b4" stroke-width="1.200"/><path d="M8 9h4" stroke="#b4b4b4" stroke-width=".9"/><path d="M12.8 11.8l4 4" stroke="#b4b4b4" stroke-width="1.800"/></svg>
<svg style="left:1010px;top:863px" width="20" height="20" viewBox="0 0 20 20"><path d="M1.500 3.500h15" stroke="#b4b4b4" stroke-width="1.200"/><path d="M0 3.500l3-2.500v5zM18 3.500l-3-2.500v5z" fill="#b4b4b4"/><circle cx="9" cy="10.5" r="3.800" fill="none" stroke="#b4b4b4" stroke-width="1.200"/><path d="M7 10.5h4" stroke="#b4b4b4" stroke-width=".9"/><path d="M11.8 13.3l4 4" stroke="#b4b4b4" stroke-width="1.800"/><path d="M9 8.5v4" stroke="#b4b4b4" stroke-width="1"/></svg>
<svg style="left:1040px;top:863px" width="20" height="20" viewBox="0 0 20 20"><path d="M1.500 3.500h15" stroke="#b4b4b4" stroke-width="1.200"/><path d="M0 3.500l3-2.500v5zM18 3.500l-3-2.500v5z" fill="#b4b4b4"/><circle cx="9" cy="10.5" r="3.800" fill="none" stroke="#b4b4b4" stroke-width="1.200"/><path d="M7 10.5h4" stroke="#b4b4b4" stroke-width=".9"/><path d="M11.8 13.3l4 4" stroke="#b4b4b4" stroke-width="1.800"/></svg>
<!-- LEVELS -->
<div class="pn" style="left:491px;top:896px;width:605px;height:95px"></div>
<div class="t" style="left:503px;top:902px;color:#b9b9b9">电平</div>
<div class="ham" style="left:537px;top:906px"></div>
<div class="a" style="left:496px;top:933px;width:594px;height:37px;background:#1c1c1c;border:1px solid #000"></div>
<div class="a" style="left:497.600px;top:934px;width:1.500px;height:35px;background:repeating-linear-gradient(#ece400 0 5px,#1c1c1c 5px 6px)"></div>
<div class="a" style="left:1080px;top:934px;width:9px;height:35px;border-left:1px solid #000;background:repeating-linear-gradient(#1c1c1c 0 5px,#000 5px 6px)"></div>
<svg style="left:496px;top:970px" width="600" height="6" viewBox="0 0 600 6" shape-rendering="crispEdges"><rect x="31" y="0" width="1" height="4" fill="#8c8c8c"/><rect x="21" y="0" width="1" height="2" fill="#6a6a6a"/><rect x="12" y="0" width="1" height="2" fill="#6a6a6a"/><rect x="60" y="0" width="1" height="4" fill="#8c8c8c"/><rect x="50" y="0" width="1" height="2" fill="#6a6a6a"/><rect x="41" y="0" width="1" height="2" fill="#6a6a6a"/><rect x="89" y="0" width="1" height="4" fill="#8c8c8c"/><rect x="79" y="0" width="1" height="2" fill="#6a6a6a"/><rect x="70" y="0" width="1" height="2" fill="#6a6a6a"/><rect x="118" y="0" width="1" height="4" fill="#8c8c8c"/><rect x="108" y="0" width="1" height="2" fill="#6a6a6a"/><rect x="99" y="0" width="1" height="2" fill="#6a6a6a"/><rect x="147" y="0" width="1" height="4" fill="#8c8c8c"/><rect x="137" y="0" width="1" height="2" fill="#6a6a6a"/><rect x="128" y="0" width="1" height="2" fill="#6a6a6a"/><rect x="176" y="0" width="1" height="4" fill="#8c8c8c"/><rect x="166" y="0" width="1" height="2" fill="#6a6a6a"/><rect x="157" y="0" width="1" height="2" fill="#6a6a6a"/><rect x="205" y="0" width="1" height="4" fill="#8c8c8c"/><rect x="196" y="0" width="1" height="2" fill="#6a6a6a"/><rect x="186" y="0" width="1" height="2" fill="#6a6a6a"/><rect x="234" y="0" width="1" height="4" fill="#8c8c8c"/><rect x="225" y="0" width="1" height="2" fill="#6a6a6a"/><rect x="215" y="0" width="1" height="2" fill="#6a6a6a"/><rect x="263" y="0" width="1" height="4" fill="#8c8c8c"/><rect x="254" y="0" width="1" height="2" fill="#6a6a6a"/><rect x="244" y="0" width="1" height="2" fill="#6a6a6a"/><rect x="292" y="0" width="1" height="4" fill="#8c8c8c"/><rect x="283" y="0" width="1" height="2" fill="#6a6a6a"/><rect x="273" y="0" width="1" height="2" fill="#6a6a6a"/><rect x="321" y="0" width="1" height="4" fill="#8c8c8c"/><rect x="312" y="0" width="1" height="2" fill="#6a6a6a"/><rect x="302" y="0" width="1" height="2" fill="#6a6a6a"/><rect x="350" y="0" width="1" height="4" fill="#8c8c8c"/><rect x="341" y="0" width="1" height="2" fill="#6a6a6a"/><rect x="331" y="0" width="1" height="2" fill="#6a6a6a"/><rect x="379" y="0" width="1" height="4" fill="#8c8c8c"/><rect x="370" y="0" width="1" height="2" fill="#6a6a6a"/><rect x="360" y="0" width="1" height="2" fill="#6a6a6a"/><rect x="408" y="0" width="1" height="4" fill="#8c8c8c"/><rect x="399" y="0" width="1" height="2" fill="#6a6a6a"/><rect x="389" y="0" width="1" height="2" fill="#6a6a6a"/><rect x="437" y="0" width="1" height="4" fill="#8c8c8c"/><rect x="428" y="0" width="1" height="2" fill="#6a6a6a"/><rect x="418" y="0" width="1" height="2" fill="#6a6a6a"/><rect x="466" y="0" width="1" height="4" fill="#8c8c8c"/><rect x="457" y="0" width="1" height="2" fill="#6a6a6a"/><rect x="447" y="0" width="1" height="2" fill="#6a6a6a"/><rect x="495" y="0" width="1" height="4" fill="#8c8c8c"/><rect x="486" y="0" width="1" height="2" fill="#6a6a6a"/><rect x="476" y="0" width="1" height="2" fill="#6a6a6a"/><rect x="525" y="0" width="1" height="4" fill="#8c8c8c"/><rect x="515" y="0" width="1" height="2" fill="#6a6a6a"/><rect x="505" y="0" width="1" height="2" fill="#6a6a6a"/><rect x="554" y="0" width="1" height="4" fill="#8c8c8c"/><rect x="544" y="0" width="1" height="2" fill="#6a6a6a"/><rect x="534" y="0" width="1" height="2" fill="#6a6a6a"/><rect x="583" y="0" width="1" height="4" fill="#8c8c8c"/><rect x="573" y="0" width="1" height="2" fill="#6a6a6a"/><rect x="563" y="0" width="1" height="2" fill="#6a6a6a"/><rect x="2" y="0" width="1" height="4" fill="#8c8c8c"/></svg>
<div class="t lvl" style="left:497px;top:973.500px">dB</div>
<div class="t lvl" style="left:512.5px;top:973.500px;width:30px;text-align:center">-57</div>
<div class="t lvl" style="left:541.5px;top:973.500px;width:30px;text-align:center">-54</div>
<div class="t lvl" style="left:570.6px;top:973.500px;width:30px;text-align:center">-51</div>
<div class="t lvl" style="left:599.6px;top:973.500px;width:30px;text-align:center">-48</div>
<div class="t lvl" style="left:628.6px;top:973.500px;width:30px;text-align:center">-45</div>
<div class="t lvl" style="left:657.6px;top:973.500px;width:30px;text-align:center">-42</div>
<div class="t lvl" style="left:686.7px;top:973.500px;width:30px;text-align:center">-39</div>
<div class="t lvl" style="left:715.7px;top:973.500px;width:30px;text-align:center">-36</div>
<div class="t lvl" style="left:744.7px;top:973.500px;width:30px;text-align:center">-33</div>
<div class="t lvl" style="left:773.8px;top:973.500px;width:30px;text-align:center">-30</div>
<div class="t lvl" style="left:802.8px;top:973.500px;width:30px;text-align:center">-27</div>
<div class="t lvl" style="left:831.8px;top:973.500px;width:30px;text-align:center">-24</div>
<div class="t lvl" style="left:860.9px;top:973.500px;width:30px;text-align:center">-21</div>
<div class="t lvl" style="left:889.9px;top:973.500px;width:30px;text-align:center">-18</div>
<div class="t lvl" style="left:918.9px;top:973.500px;width:30px;text-align:center">-15</div>
<div class="t lvl" style="left:948.0px;top:973.500px;width:30px;text-align:center">-12</div>
<div class="t lvl" style="left:977.0px;top:973.500px;width:30px;text-align:center">-9</div>
<div class="t lvl" style="left:1006.0px;top:973.500px;width:30px;text-align:center">-6</div>
<div class="t lvl" style="left:1035.0px;top:973.500px;width:30px;text-align:center">-3</div>
<div class="t lvl" style="left:1064.1px;top:973.500px;width:30px;text-align:center">0</div>
<!-- SELECTION/VIEW -->
<div class="pn" style="left:1100px;top:896px;width:257px;height:95px"></div>
<div class="t" style="left:1112px;top:902px;color:#c8c8c8">选区/视图</div>
<div class="ham" style="left:1175px;top:906px"></div>
<div class="t" style="left:1140px;top:927px;color:#8c8c8c">开始</div>
<div class="t" style="left:1212px;top:927px;color:#8c8c8c">结束</div>
<div class="t" style="left:1283px;top:927px;color:#8c8c8c">持续时间</div>
<div class="t" style="left:1111px;top:946px;color:#9a9a9a">选区</div>
<div class="t bl sv" style="left:1142px;top:946px">0:00.000</div>
<div class="t bl sv" style="left:1214px;top:946px">3:57.139</div>
<div class="t bl sv" style="left:1285px;top:946px">3:57.139</div>
<div class="t" style="left:1111px;top:967px;color:#9a9a9a">视图</div>
<div class="t bl sv" style="left:1142px;top:967px">2:11.970</div>
<div class="t bl sv" style="left:1214px;top:967px">2:12.335</div>
<div class="t bl sv" style="left:1285px;top:967px">0:00.364</div>
<!-- ESSENTIAL SOUND -->
<div class="pn" style="left:1074px;top:80px;width:282px;height:812px"></div>
<div class="t" style="left:1086px;top:86px;color:#c8c8c8">基本声音</div>
<div class="ham" style="left:1144px;top:90px"></div>
<div class="a" style="left:1075px;top:108px;width:279px;height:2px;background:#2e2e2e"></div>
<div class="a" style="left:1075px;top:138px;width:279px;height:2px;background:#2e2e2e"></div>
<div class="a" style="left:1075px;top:174px;width:279px;height:2px;background:#2e2e2e"></div>
<div class="a" style="left:1075px;top:205px;width:279px;height:2px;background:#2e2e2e"></div>
<div class="t" style="left:1086px;top:118px;color:#8c8c8c;font-style:italic">无选择项</div>
<div class="t" style="left:1085px;top:148px;color:#4f4f4f">预设:</div>
<div class="a" style="left:1118px;top:146px;width:236px;height:20px;background:#2b2b2b;border-radius:3px"></div>
<div class="a" style="left:1355px;top:236px;width:1px;height:655px;background:#3c3c3c"></div>
<div class="a" style="left:1075px;top:880px;width:282px;height:11px;background:#1f1f1f"></div>
<div class="sb" style="left:1076px;top:880px;width:259px;height:10px"></div>
<!-- STATUS BAR -->
<div class="a" style="left:1px;top:991px;width:1355px;height:21px;background:#232323;border-top:1px solid #161616"></div>
<div class="t sc" style="left:9px;top:995px">应用<span style="letter-spacing:-1px">"</span>消除齿音<span style="letter-spacing:-1px">"</span> 完成用时 <span class="sn" style="position:static">3.91</span> 秒</div>
<div class="a" style="left:728px;top:995px;width:1px;height:14px;background:#2f2f2f"></div>
<div class="a" style="left:777px;top:995px;width:1px;height:14px;background:#2f2f2f"></div>
<div class="a" style="left:895px;top:995px;width:1px;height:14px;background:#2f2f2f"></div>
<div class="a" style="left:1100px;top:995px;width:1px;height:14px;background:#2f2f2f"></div>
<div class="a" style="left:1162px;top:995px;width:1px;height:14px;background:#2f2f2f"></div>
<div class="a" style="left:1228px;top:995px;width:1px;height:14px;background:#2f2f2f"></div>
<div class="a" style="left:1307px;top:995px;width:1px;height:14px;background:#2f2f2f"></div>
<div class="t sn" style="left:904px;top:995px">44100 Hz</div>
<div class="t sd" style="left:954px;top:995px">●</div>
<div class="t sn" style="left:964px;top:995px">32</div>
<div class="t sc" style="left:979px;top:995px">位</div>
<div class="t sc" style="left:989px;top:995px">（浮点）</div>
<div class="t sd" style="left:1042px;top:995px">●</div>
<div class="t sn" style="left:1052px;top:995px">5.1</div>
<div class="t sc" style="left:1069px;top:995px">声道</div>
<div class="t sn" style="left:1109px;top:995px">0 B</div>
<div class="t sn" style="left:1179px;top:995px">0:00.000</div>
<div class="t sn" style="left:1236px;top:995px">4.90 GB</div>
<div class="t sc" style="left:1276px;top:995px">空闲</div>
<!-- WATERMARKS -->
<div class="t" style="left:1266px;top:944px;font-size:21px;line-height:26px;height:26px;color:rgba(200,200,200,.55)">激活 Windows</div>
<div class="t" style="left:1266px;top:971px;font-size:15px;line-height:20px;height:20px;color:rgba(200,200,200,.55)">转到“设置”以激活</div>
<svg style="left:1196px;top:960px" width="50" height="46" viewBox="0 0 50 46"><path d="M44 2C28 2 8 10 4 24c-2 8 4 14 12 15-5-3-7-8-4-14C16 14 30 6 44 2z" fill="#2a6fd0" opacity=".85"/><path d="M10 40c10 6 28 2 30-10 1-6-4-10-10-10 4 2 5 6 3 10-3 6-12 10-23 10z" fill="#5fb530" opacity=".85"/><path d="M16 30c2-6 10-10 16-9-4 1-7 4-7 8 0 3-6 4-9 1z" fill="#e8a020" opacity=".8"/></svg>
<div class="t" style="left:1241px;top:962px;font-size:21px;line-height:26px;height:26px;font-weight:bold;color:rgba(34,104,200,.8)">极光下载站</div>
<div class="t" style="left:1241px;top:986px;font-size:17px;line-height:20px;height:20px;color:rgba(30,150,55,.92)">www.xz7.com</div>
<!-- DROPDOWN MENU -->
<div class="a" id="dd">
<div class="di" style="top:2px">标准化为<span class="l"> -0.1dB</span></div>
<div class="di" style="top:24px">标准化为<span class="l"> -3dB</span></div>
<div class="di" style="top:46px">电话语音</div>
<div class="di" style="top:68px">强制限幅<span class="l"> -0.1dB</span></div>
<div class="di" style="top:90px">升调</div>
<div class="di" style="top:112px">降调</div>
<div class="di" style="top:134px">降噪</div>
<div class="di" style="top:156px">修复<span class="l"> DC </span>偏移</div>
<div class="di" style="top:178px">减少混响</div>
<div class="di" style="top:200px">变换为<span class="l"> 5.1</span></div>
<div class="di" style="top:222px">变换为单声道</div>
<div class="di" style="top:244px">变换为立体声</div>
<div class="di" style="top:266px">旁白压缩器</div>
<div class="di" style="top:288px">消除齿音</div>
<div class="di" style="top:310px">淡入</div>
<div class="di" style="top:332px">淡出</div>
<div class="a" style="left:2px;top:354px;width:185px;height:22px;background:#91c9f7"></div>
<div class="di" style="top:354px">移除<span class="l"> 60 Hz </span>嗡嗡声</div>
<div class="di" style="top:376px">移除人声</div>
<div class="di" style="top:398px">自动修复</div>
<div class="sep" style="top:423px"></div>
<div class="di" style="top:427px">删除收藏<span class="p">(D)...</span></div>
<div class="di" style="top:449px">编辑收藏<span class="p">(E)...</span></div>
<div class="sep" style="top:474px"></div>
<div class="di" style="top:478px">开始记录收藏<span class="p">(S)...</span></div>
<div class="di" style="top:500px;color:#6d6d6d">停止录制收藏<span class="p">(P)...</span></div>
</div>
<div class="a" style="left:286px;top:400px;width:155px;height:32px;border:3px solid #e60f17"></div>

</div>
</body></html>
